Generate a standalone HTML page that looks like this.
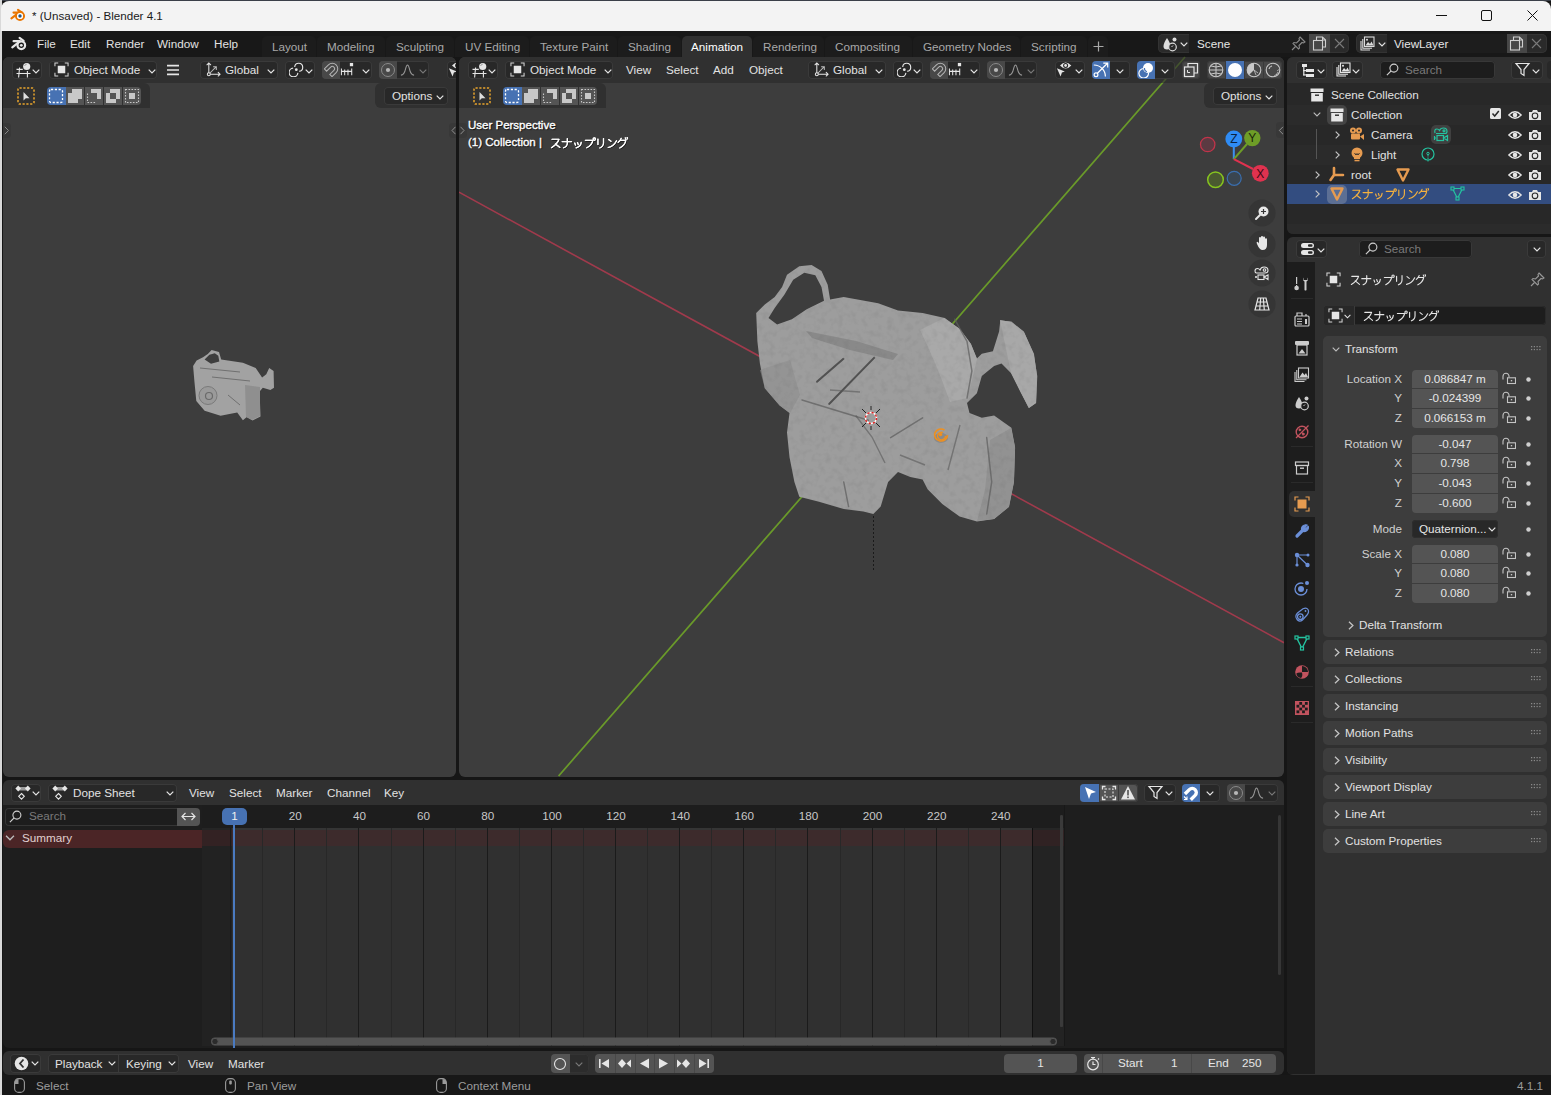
<!DOCTYPE html>
<html><head><meta charset="utf-8">
<style>
*{margin:0;padding:0;box-sizing:border-box}
html,body{width:1551px;height:1095px;overflow:hidden;background:#161616;font-family:"Liberation Sans",sans-serif;font-size:11.7px;color:#dcdcdc}
.a{position:absolute}
.t{position:absolute;white-space:nowrap;line-height:1;margin-top:-1px}
svg{position:absolute;overflow:visible}
</style></head><body>
<svg width="0" height="0" style="position:absolute">
<defs>
 <symbol id="chev" viewBox="0 0 8 5"><path d="M0.7 0.7 L4 4 L7.3 0.7" fill="none" stroke="#e6e6e6" stroke-width="1.2"/></symbol>
 <symbol id="chevd" viewBox="0 0 8 5"><path d="M0.7 0.7 L4 4 L7.3 0.7" fill="none" stroke="#7a7a7a" stroke-width="1.1"/></symbol>
 <symbol id="ed3d" viewBox="0 0 16 16"><g stroke="#e6e6e6" stroke-width="1.1" fill="none"><path d="M0.5 7.4 H6.8 M0.5 11.5 H14.5 M3.6 5.5 L2.6 15.5 M11.4 9 V15.5"/></g><circle cx="10.7" cy="4.5" r="3.6" fill="#e6e6e6"/><path d="M8.6 4 Q9 2.3 10.8 2.1" stroke="#8a8a8a" stroke-width="0.8" fill="none"/></symbol>
 <symbol id="objmode" viewBox="0 0 16 16"><path d="M1 4.5 V1 H4.5 M11.5 1 H15 V4.5 M15 11.5 V15 H11.5 M4.5 15 H1 V11.5" fill="none" stroke="#d6d6d6" stroke-width="1.1"/><rect x="4" y="4" width="8" height="8" fill="#e6e6e6"/></symbol>
 <symbol id="orient" viewBox="0 0 16 16"><g stroke="#e6e6e6" stroke-width="1.1" fill="none" stroke-linecap="round"><path d="M3 13 V1 M1 3 L3 1 L5 3 M3 13 H15 M13 11 L15 13 L13 15"/><path d="M4 12 L11 5 M8 5 H11 V8" stroke="#bbb"/><circle cx="3" cy="13" r="1.6" fill="#303030"/></g></symbol>
 <symbol id="pivot" viewBox="0 0 15 15"><g stroke="#e6e6e6" stroke-width="1.15" fill="none"><path d="M5.72 4.95 A4 4 0 1 1 10.05 9.28"/><path d="M8.88 10.88 A4.4 4.4 0 1 1 4.12 6.12"/></g><circle cx="7.3" cy="7.7" r="1.4" fill="#e6e6e6"/></symbol>
 <symbol id="magnet" viewBox="0 0 16 16"><path d="M2.2 13.5 V7.3 A5.8 5.8 0 0 1 13.8 7.3 V13.5 H10.4 V7.3 A2.4 2.4 0 0 0 5.6 7.3 V13.5 Z" fill="none" stroke="#b3b3b3" stroke-width="1.1" transform="rotate(45 8 8) translate(0 -0.5)"/></symbol>
 <symbol id="incr" viewBox="0 0 16 16"><g stroke="#e6e6e6" stroke-width="1.1" fill="none"><path d="M1 10 H13 M1.5 7 V14 M5 8 V14 M8.5 8 V14 M12.5 7 V14"/></g><rect x="10.5" y="1" width="3.5" height="3.5" fill="#e6e6e6"/></symbol>
 <symbol id="propdot" viewBox="0 0 16 16"><circle cx="8" cy="8" r="6.5" fill="none" stroke="#8a8a8a" stroke-width="1"/><circle cx="8" cy="8" r="2.1" fill="#b8b8b8"/></symbol>
 <symbol id="falloff" viewBox="0 0 16 16"><path d="M1 14 Q4.5 14 6 7 Q8 -0.5 10 7 Q11.5 14 15 14" fill="none" stroke="#9a9a9a" stroke-width="1.1"/></symbol>
 <symbol id="hamb" viewBox="0 0 16 14"><path d="M1 2 H15 M1 7 H15 M1 12 H15" stroke="#e6e6e6" stroke-width="2"/></symbol>
 <symbol id="seltool" viewBox="0 0 18 18"><rect x="1" y="1" width="16" height="16" rx="1.5" fill="none" stroke="#e8a42c" stroke-width="1.5" stroke-dasharray="2.2 1.6"/><path d="M6.5 5 L6.5 13.5 L8.8 11.3 L12.5 11.3 Z" fill="#dedede"/></symbol>
 <symbol id="mset" viewBox="0 0 16 16"><rect x="1.5" y="1.5" width="13" height="13" rx="1.5" fill="none" stroke="#fff" stroke-width="1.3" stroke-dasharray="2.2 1.6"/></symbol>
 <symbol id="mext" viewBox="0 0 16 16"><path d="M5 1 H15 V11 H11 V15 H1 V5 H5 Z" fill="#c8c8c8"/></symbol>
 <symbol id="msub" viewBox="0 0 16 16"><path d="M5 1 H15 V11 H11 V5 H5 Z" fill="#c8c8c8"/><path d="M1.5 5.5 V14.5 H10.5" fill="none" stroke="#c8c8c8" stroke-width="1.1" stroke-dasharray="1.6 1.4"/></symbol>
 <symbol id="mdif" viewBox="0 0 16 16"><path d="M5 1 H15 V11 H11 V5 H5 Z M1 5 H5 V11 H11 V15 H1 Z" fill="#c8c8c8"/></symbol>
 <symbol id="mint" viewBox="0 0 16 16"><rect x="1.5" y="1.5" width="13" height="13" fill="none" stroke="#c8c8c8" stroke-width="1.1" stroke-dasharray="1.6 1.4"/><rect x="5" y="5" width="6" height="6" fill="#c8c8c8"/></symbol>
 <symbol id="selvis" viewBox="0 0 18 18"><path d="M6 4.5 Q11.6 -1.6 17.3 4.5 Q11.6 10.6 6 4.5 Z" fill="#e6e6e6"/><circle cx="11.6" cy="4.5" r="2.5" fill="#282828"/><circle cx="11.6" cy="4.5" r="1.4" fill="#e6e6e6"/><path d="M2.9 7.2 L10.8 10.5 L7.9 11.6 L6.6 15.5 Z" fill="#e6e6e6"/></symbol>
 <symbol id="gizmo" viewBox="0 0 18 18"><g fill="none" stroke="#fff" stroke-width="1.2"><path d="M1.8 4 A11.5 11.5 0 0 1 13.4 15.5"/><circle cx="4" cy="13.7" r="1.9"/><path d="M5.4 12.3 L15.5 2.3 M11.3 2.1 H15.7 V6.5"/></g></symbol>
 <symbol id="overlay" viewBox="0 0 16 16"><circle cx="10" cy="6" r="5" fill="#fff"/><path d="M5.5 6.5 A4.8 4.8 0 1 0 10.5 11" fill="none" stroke="#fff" stroke-width="1.2"/><path d="M6.5 6 A3 3 0 0 0 9 9.5" fill="none" stroke="#4772b3" stroke-width="1.2"/></symbol>
 <symbol id="xray" viewBox="0 0 16 16"><rect x="1.5" y="5" width="9.5" height="9.5" fill="none" stroke="#e6e6e6" stroke-width="1.2"/><path d="M5 5 V1.5 H14.5 V11 H11" fill="none" stroke="#e6e6e6" stroke-width="1.2"/><path d="M4.5 8 V10.5 H7" fill="none" stroke="#e6e6e6" stroke-width="1"/></symbol>
 <symbol id="shwire" viewBox="0 0 16 16"><circle cx="8" cy="8" r="6.8" fill="none" stroke="#c8c8c8" stroke-width="1.1"/><path d="M1.2 8 H14.8 M8 1.2 V14.8 M3 4 Q8 6 13 4 M3 12 Q8 10 13 12" fill="none" stroke="#c8c8c8" stroke-width="1"/></symbol>
 <symbol id="shsolid" viewBox="0 0 16 16"><circle cx="8" cy="8" r="7" fill="#fff"/></symbol>
 <symbol id="shmat" viewBox="0 0 16 16"><circle cx="8" cy="8" r="6.8" fill="none" stroke="#c8c8c8" stroke-width="1.1"/><path d="M8 1.2 V8 L3.2 12.8 A6.8 6.8 0 0 1 8 1.2 Z" fill="#c8c8c8"/><path d="M8 8 L10 13 M8 8 L12 11" stroke="#c8c8c8" stroke-width="0.8"/></symbol>
 <symbol id="shrend" viewBox="0 0 16 16"><circle cx="8" cy="8" r="6.8" fill="none" stroke="#c8c8c8" stroke-width="1.1"/><path d="M4 7 Q4.5 4.5 7 4" fill="none" stroke="#c8c8c8" stroke-width="1.2"/><path d="M11 13 L13 10 M9 14 L12.5 12 M12 9 L14 7.5" stroke="#c8c8c8" stroke-width="0.7"/></symbol>
 <symbol id="kata" viewBox="0 0 84 12"><g fill="none" stroke="currentColor" stroke-width="1.25" stroke-linecap="round" stroke-linejoin="round">
  <path d="M2 2 H9.5 Q8 7 1.5 11 M5.8 7 L10.5 10.8"/>
  <path d="M13 4.5 H23 M18.5 1.2 V6.5 Q18.3 9.8 14.5 11.2"/>
  <path d="M26.5 6 L27.3 8.3 M29.5 5.5 L30.3 7.8 M33.5 5.3 Q33 9.8 28 11.3"/>
  <path d="M38 3.2 H46 Q45 8.5 39.5 11.2"/><circle cx="47.6" cy="1.8" r="1.3"/>
  <path d="M51.5 1.8 V7.5 M57.5 1.2 V6 Q57.3 9.8 53.5 11.3"/>
  <path d="M63 2.3 L65.5 4.2 M62.5 10.8 Q68.5 9.5 71.5 3.5"/>
  <path d="M76.5 1 Q75.5 3.8 73.3 5.3 M76 3.2 H81.5 Q80.5 8.8 75 11.3 M81 0.5 L81.8 2.2 M83 0.1 L83.8 1.8"/>
 </g></symbol>
 <symbol id="eye" viewBox="0 0 14 10"><path d="M0.8 5 Q7 -1.5 13.2 5 Q7 11.5 0.8 5 Z" fill="none" stroke="#e6e6e6" stroke-width="1.3"/><circle cx="7" cy="5" r="2.3" fill="#e6e6e6"/></symbol>
 <symbol id="cam" viewBox="0 0 14 12"><path d="M1 3 H4 L5 1 H9 L10 3 H13 V11 H1 Z" fill="#e6e6e6"/><circle cx="7" cy="6.8" r="2.8" fill="none" stroke="#282828" stroke-width="1.1"/></symbol>
 <symbol id="coll" viewBox="0 0 14 14"><rect x="0.5" y="0.5" width="13" height="3.5" fill="#e6e6e6"/><rect x="1.2" y="5" width="11.6" height="8.5" fill="#e6e6e6"/><rect x="5" y="6.5" width="4" height="1.4" fill="#282828"/></symbol>
 <symbol id="chevr" viewBox="0 0 5 8"><path d="M0.7 0.7 L4.2 4 L0.7 7.3" fill="none" stroke="#c4c4c4" stroke-width="1.15"/></symbol>
 <symbol id="chevdn" viewBox="0 0 8 5"><path d="M0.7 0.7 L4 4 L7.3 0.7" fill="none" stroke="#bdbdbd" stroke-width="1.1"/></symbol>
 <symbol id="lock" viewBox="0 0 14 14"><path d="M1 7.5 V4.3 A3 3 0 0 1 7 4.3 V5.3" fill="none" stroke="#c4c4c4" stroke-width="1.1"/><rect x="5.5" y="5.8" width="8" height="5.7" fill="none" stroke="#c4c4c4" stroke-width="1.1"/><rect x="8.8" y="8" width="1.4" height="1.4" fill="#c4c4c4"/></symbol>
 <symbol id="dots" viewBox="0 0 12 6"><g fill="#8a8a8a"><rect x="0" y="0" width="1.5" height="1.5"/><rect x="3.3" y="0" width="1.5" height="1.5"/><rect x="6.6" y="0" width="1.5" height="1.5"/><rect x="9.9" y="0" width="1.5" height="1.5"/><rect x="0" y="3.5" width="1.5" height="1.5"/><rect x="3.3" y="3.5" width="1.5" height="1.5"/><rect x="6.6" y="3.5" width="1.5" height="1.5"/><rect x="9.9" y="3.5" width="1.5" height="1.5"/></g></symbol>
 <symbol id="search" viewBox="0 0 14 14"><circle cx="8.5" cy="5.5" r="4.3" fill="none" stroke="#d0d0d0" stroke-width="1.2"/><path d="M5.5 8.5 L1 13" stroke="#d0d0d0" stroke-width="1.3"/></symbol>
 <symbol id="objsq" viewBox="0 0 16 16"><path d="M1 4.5 V1 H4.5 M11.5 1 H15 V4.5 M15 11.5 V15 H11.5 M4.5 15 H1 V11.5" fill="none" stroke="#d6d6d6" stroke-width="1.1"/><rect x="4" y="4" width="8" height="8" fill="#e6e6e6"/></symbol>
 <symbol id="edds" viewBox="0 0 16 16"><rect x="4" y="2" width="8" height="3.5" fill="#9a9a9a"/><g fill="#e6e6e6"><path d="M3.2 0.5 L6 3.5 L3.2 6.5 L0.4 3.5 Z"/><path d="M12.8 0.5 L15.6 3.5 L12.8 6.5 L10 3.5 Z"/></g><path d="M6.5 8.5 L9.3 11.3 L6.5 14.1 L3.7 11.3 Z" fill="none" stroke="#e6e6e6" stroke-width="1.1"/></symbol>
 <symbol id="cursorsel" viewBox="0 0 16 16"><path d="M3 2 L14 7 L9 8.5 L7 14 Z" fill="#fff"/></symbol>
</defs></svg>

<div class="a" style="left:0px;top:0px;width:1551px;height:1px;background:#3a3f48;border-radius:0px;"></div>
<div class="a" style="left:0px;top:0px;width:2px;height:1095px;background:#d9d9d9;border-radius:0px;"></div>
<div class="a" style="left:0px;top:1px;width:2px;height:30px;background:#d9d9d9;border-radius:0px;"></div>
<div class="a" style="left:1px;top:1px;width:1550px;height:30px;background:#f3f3f3;border-radius:8px 8px 0 0;"></div>
<div class="a" style="left:2px;top:31px;width:1549px;height:26px;background:#181818;border-radius:0px;"></div>
<svg style="left:0px;top:0px" width="30" height="30" viewBox="0 0 30 30"><g stroke="#ea7600" stroke-width="2.1" stroke-linecap="round" fill="none"><path d="M11.4 18.3 L16.6 14.3"/><path d="M13.5 12.6 H19"/><path d="M18 9.8 L22 12.6"/><circle cx="20" cy="16" r="4"/></g><circle cx="20" cy="16" r="3" fill="#fff"/><circle cx="20" cy="16" r="1.7" fill="#265787"/></svg>
<div class="t" style="left:32px;top:10.5px;color:#1a1a1a;font-size:11.6px;">* (Unsaved) - Blender 4.1</div>
<svg style="left:1436px;top:15px" width="11" height="1"><rect width="11" height="1" fill="#111"/></svg>
<svg style="left:1481px;top:10px" width="11" height="11"><rect x="0.5" y="0.5" width="10" height="10" rx="1.5" fill="none" stroke="#111" stroke-width="1"/></svg>
<svg style="left:1527px;top:10px" width="11" height="11"><path d="M0.5 0.5 L10.5 10.5 M10.5 0.5 L0.5 10.5" stroke="#111" stroke-width="1"/></svg>
<svg style="left:0px;top:30px" width="30" height="25" viewBox="0 30 30 25"><g stroke="#e6e6e6" stroke-width="2.2" stroke-linecap="round" fill="none"><path d="M12.3 47.4 L17.6 43.2"/><path d="M13.6 41.2 H20"/><path d="M19.6 37.8 L23.6 40.8"/><circle cx="21.3" cy="45.3" r="3.8"/></g><circle cx="21.3" cy="45.3" r="1.4" fill="#e6e6e6"/></svg>
<div class="t" style="left:37px;top:39px;color:#e2e2e2;">File</div>
<div class="t" style="left:70px;top:39px;color:#e2e2e2;">Edit</div>
<div class="t" style="left:106px;top:39px;color:#e2e2e2;">Render</div>
<div class="t" style="left:157px;top:39px;color:#e2e2e2;">Window</div>
<div class="t" style="left:214px;top:39px;color:#e2e2e2;">Help</div>
<div class="a" style="left:262px;top:36px;width:54px;height:21px;background:#1c1c1c;border-radius:5px 5px 0 0;"></div>
<div class="t" style="left:272px;top:42px;color:#a8a8a8;">Layout</div>
<div class="a" style="left:317px;top:36px;width:68px;height:21px;background:#1c1c1c;border-radius:5px 5px 0 0;"></div>
<div class="t" style="left:327px;top:42px;color:#a8a8a8;">Modeling</div>
<div class="a" style="left:386px;top:36px;width:68px;height:21px;background:#1c1c1c;border-radius:5px 5px 0 0;"></div>
<div class="t" style="left:396px;top:42px;color:#a8a8a8;">Sculpting</div>
<div class="a" style="left:455px;top:36px;width:74px;height:21px;background:#1c1c1c;border-radius:5px 5px 0 0;"></div>
<div class="t" style="left:465px;top:42px;color:#a8a8a8;">UV Editing</div>
<div class="a" style="left:530px;top:36px;width:87px;height:21px;background:#1c1c1c;border-radius:5px 5px 0 0;"></div>
<div class="t" style="left:540px;top:42px;color:#a8a8a8;">Texture Paint</div>
<div class="a" style="left:618px;top:36px;width:63px;height:21px;background:#1c1c1c;border-radius:5px 5px 0 0;"></div>
<div class="t" style="left:628px;top:42px;color:#a8a8a8;">Shading</div>
<div class="a" style="left:682px;top:36px;width:70px;height:21px;background:#303030;border-radius:5px 5px 0 0;"></div>
<div class="t" style="left:691px;top:42px;color:#ffffff;">Animation</div>
<div class="a" style="left:753px;top:36px;width:71px;height:21px;background:#1c1c1c;border-radius:5px 5px 0 0;"></div>
<div class="t" style="left:763px;top:42px;color:#a8a8a8;">Rendering</div>
<div class="a" style="left:825px;top:36px;width:87px;height:21px;background:#1c1c1c;border-radius:5px 5px 0 0;"></div>
<div class="t" style="left:835px;top:42px;color:#a8a8a8;">Compositing</div>
<div class="a" style="left:913px;top:36px;width:107px;height:21px;background:#1c1c1c;border-radius:5px 5px 0 0;"></div>
<div class="t" style="left:923px;top:42px;color:#a8a8a8;">Geometry Nodes</div>
<div class="a" style="left:1021px;top:36px;width:66px;height:21px;background:#1c1c1c;border-radius:5px 5px 0 0;"></div>
<div class="t" style="left:1031px;top:42px;color:#a8a8a8;">Scripting</div>
<div class="a" style="left:1088px;top:36px;width:20px;height:21px;background:#1c1c1c;border-radius:5px 5px 0 0;"></div>
<svg style="left:1093px;top:41px" width="11" height="11"><path d="M5.5 0.5 V10.5 M0.5 5.5 H10.5" stroke="#a8a8a8" stroke-width="1.2"/></svg>
<div class="a" style="left:1158px;top:34px;width:191px;height:19px;background:#2a2a2a;border-radius:5px;box-shadow:inset 0 0 0 1px #333"></div>
<div class="a" style="left:1189px;top:34px;width:120px;height:19px;background:#1d1d1d;border-radius:0px;"></div>
<div class="a" style="left:1309px;top:34px;width:21px;height:19px;background:#474747;border-radius:0px;"></div>
<svg style="left:1162px;top:36px" width="16" height="16" viewBox="0 0 16 16"><path d="M5 2 Q1 8 1.5 11 Q2 13.5 5 13.5 Q8 13.5 8.5 11 Q9 8 5 2 Z" fill="#ddd"/><circle cx="12.5" cy="3.5" r="2" fill="#ddd"/><circle cx="10.5" cy="11" r="3.8" fill="#2a2a2a" stroke="#ddd" stroke-width="1.2"/><path d="M9.5 11 L11 9.5" stroke="#ddd" stroke-width="1"/></svg>
<svg style="left:1180px;top:42px;" width="8" height="5"><use href="#chev" width="8" height="5"/></svg>
<div class="t" style="left:1197px;top:39px;color:#e6e6e6;">Scene</div>
<svg style="left:1291px;top:36px" width="15" height="15" viewBox="0 0 15 15"><path d="M9 1 L14 6 L12.5 7 L11 6.5 L8 9.5 L8.5 12 L7.5 13 L2 7.5 L3 6.5 L5.5 7 L8.5 4 L8 2.5 Z" fill="none" stroke="#8a8a8a" stroke-width="1.1"/><path d="M4.5 10.5 L1 14" stroke="#8a8a8a" stroke-width="1.1"/></svg>
<svg style="left:1312px;top:36px" width="15" height="15" viewBox="0 0 15 15"><path d="M4.5 4 V1 H10.5 L13.5 4 V11 H10.5" fill="none" stroke="#cfcfcf" stroke-width="1.1"/><path d="M10.5 1 V4 H13.5" fill="none" stroke="#cfcfcf" stroke-width="1"/><rect x="1.5" y="4.5" width="9" height="9.5" fill="none" stroke="#cfcfcf" stroke-width="1.1"/></svg>
<svg style="left:1334px;top:38px" width="11" height="11"><path d="M1 1 L10 10 M10 1 L1 10" stroke="#7a7a7a" stroke-width="1.1"/></svg>
<div class="a" style="left:1356px;top:34px;width:191px;height:19px;background:#2a2a2a;border-radius:5px;box-shadow:inset 0 0 0 1px #333"></div>
<div class="a" style="left:1387px;top:34px;width:120px;height:19px;background:#1d1d1d;border-radius:0px;"></div>
<div class="a" style="left:1507px;top:34px;width:20px;height:19px;background:#474747;border-radius:0px;"></div>
<svg style="left:1360px;top:36px" width="15" height="15" viewBox="0 0 15 15"><g fill="none" stroke="#ddd" stroke-width="1.1"><rect x="4.5" y="1" width="9.5" height="9.5"/><path d="M2.8 3 V12.2 H12 M1 5 V14 H10"/></g><path d="M5.5 9.5 L8 6 L10 8 L11.5 5.5 L13.5 9.5 Z" fill="#ddd"/><circle cx="7" cy="3.8" r="1" fill="#ddd"/></svg>
<svg style="left:1378px;top:42px;" width="8" height="5"><use href="#chev" width="8" height="5"/></svg>
<div class="t" style="left:1394px;top:39px;color:#e6e6e6;">ViewLayer</div>
<svg style="left:1509px;top:36px" width="15" height="15" viewBox="0 0 15 15"><path d="M4.5 4 V1 H10.5 L13.5 4 V11 H10.5" fill="none" stroke="#cfcfcf" stroke-width="1.1"/><path d="M10.5 1 V4 H13.5" fill="none" stroke="#cfcfcf" stroke-width="1"/><rect x="1.5" y="4.5" width="9" height="9.5" fill="none" stroke="#cfcfcf" stroke-width="1.1"/></svg>
<svg style="left:1531px;top:38px" width="11" height="11"><path d="M1 1 L10 10 M10 1 L1 10" stroke="#7a7a7a" stroke-width="1.1"/></svg>
<div class="a" style="left:3px;top:57px;width:453px;height:720px;background:#3d3d3d;border-radius:6px;overflow:hidden">
<div class="a" style="left:0px;top:0px;width:453px;height:26px;background:#303030;border-radius:0px;"></div>
<div class="a" style="left:0px;top:26px;width:147px;height:25px;background:#303030;border-radius:0 6px 0 0;"></div>
<div class="a" style="left:372px;top:26px;width:81px;height:25px;background:#303030;border-radius:6px 0 0 6px;"></div>
</div>
<div class="a" style="left:12px;top:61px;width:30px;height:18px;background:#282828;border-radius:4px;box-shadow:inset 0 0 0 1px #3a3a3a"></div>
<svg style="left:16px;top:62px;" width="16" height="16"><use href="#ed3d" width="16" height="16"/></svg>
<svg style="left:32px;top:69px;" width="8" height="5"><use href="#chev" width="8" height="5"/></svg>
<div class="a" style="left:49px;top:61px;width:108px;height:18px;background:#282828;border-radius:4px;box-shadow:inset 0 0 0 1px #3a3a3a"></div>
<svg style="left:54px;top:62px;" width="15" height="15"><use href="#objmode" width="15" height="15"/></svg>
<div class="t" style="left:74px;top:65px;color:#e2e2e2;">Object Mode</div>
<svg style="left:148px;top:69px;" width="8" height="5"><use href="#chev" width="8" height="5"/></svg>
<svg style="left:166px;top:64px;" width="14" height="12"><use href="#hamb" width="14" height="12"/></svg>
<div class="a" style="left:200px;top:61px;width:78px;height:18px;background:#282828;border-radius:4px;box-shadow:inset 0 0 0 1px #3a3a3a"></div>
<svg style="left:206px;top:62px;" width="15" height="15"><use href="#orient" width="15" height="15"/></svg>
<div class="t" style="left:225px;top:65px;color:#e2e2e2;">Global</div>
<svg style="left:267px;top:69px;" width="8" height="5"><use href="#chev" width="8" height="5"/></svg>
<div class="a" style="left:285px;top:61px;width:30px;height:18px;background:#282828;border-radius:4px;box-shadow:inset 0 0 0 1px #3a3a3a"></div>
<svg style="left:289px;top:62px;" width="15" height="15"><use href="#pivot" width="15" height="15"/></svg>
<svg style="left:305px;top:69px;" width="8" height="5"><use href="#chev" width="8" height="5"/></svg>
<div class="a" style="left:322px;top:61px;width:50px;height:18px;background:#282828;border-radius:4px;box-shadow:inset 0 0 0 1px #3a3a3a"></div>
<div class="a" style="left:322px;top:61px;width:18px;height:18px;background:#484848;border-radius:4px 0 0 4px;"></div>
<svg style="left:324px;top:62px;" width="15" height="15"><use href="#magnet" width="15" height="15"/></svg>
<svg style="left:340px;top:62px;" width="15" height="15"><use href="#incr" width="15" height="15"/></svg>
<svg style="left:362px;top:69px;" width="8" height="5"><use href="#chev" width="8" height="5"/></svg>
<div class="a" style="left:379px;top:61px;width:50px;height:18px;background:#282828;border-radius:4px;box-shadow:inset 0 0 0 1px #3a3a3a"></div>
<div class="a" style="left:379px;top:61px;width:18px;height:18px;background:#484848;border-radius:4px 0 0 4px;"></div>
<svg style="left:380px;top:62px;" width="16" height="16"><use href="#propdot" width="16" height="16"/></svg>
<svg style="left:400px;top:62px;" width="15" height="15"><use href="#falloff" width="15" height="15"/></svg>
<svg style="left:419px;top:69px;" width="8" height="5"><use href="#chevd" width="8" height="5"/></svg>
<div class="a" style="left:447px;top:61px;width:12px;height:18px;background:#282828;border-radius:4px;box-shadow:inset 0 0 0 1px #3a3a3a"></div>
<svg style="left:446px;top:61px;" width="18" height="18"><use href="#selvis" width="18" height="18"/></svg>
<div class="a" style="left:456px;top:57px;width:3px;height:27px;background:#161616;border-radius:0px;"></div>
<svg style="left:17px;top:87px;" width="18" height="18"><use href="#seltool" width="18" height="18"/></svg>
<div class="a" style="left:47px;top:87px;width:19px;height:18px;background:#4772b3;border-radius:4px 0 0 4px;"></div>
<svg style="left:48px;top:88px;" width="16" height="16"><use href="#mset" width="16" height="16"/></svg>
<div class="a" style="left:66px;top:87px;width:18px;height:18px;background:#545454;border-radius:0;"></div>
<svg style="left:67px;top:88px;" width="16" height="16"><use href="#mext" width="16" height="16"/></svg>
<div class="a" style="left:85px;top:87px;width:18px;height:18px;background:#545454;border-radius:0;"></div>
<svg style="left:86px;top:88px;" width="16" height="16"><use href="#msub" width="16" height="16"/></svg>
<div class="a" style="left:104px;top:87px;width:18px;height:18px;background:#545454;border-radius:0;"></div>
<svg style="left:105px;top:88px;" width="16" height="16"><use href="#mdif" width="16" height="16"/></svg>
<div class="a" style="left:123px;top:87px;width:18px;height:18px;background:#545454;border-radius:0 4px 4px 0;"></div>
<svg style="left:124px;top:88px;" width="16" height="16"><use href="#mint" width="16" height="16"/></svg>
<div class="a" style="left:384px;top:87px;width:64px;height:18px;background:#282828;border-radius:4px;box-shadow:inset 0 0 0 1px #3a3a3a"></div>
<div class="t" style="left:392px;top:91px;color:#e2e2e2;">Options</div>
<svg style="left:436px;top:95px;" width="8" height="5"><use href="#chev" width="8" height="5"/></svg>
<div class="a" style="left:459px;top:57px;width:825px;height:720px;background:#3d3d3d;border-radius:6px;overflow:hidden">
<div class="a" style="left:0px;top:0px;width:825px;height:26px;background:#303030;border-radius:0px;"></div>
<div class="a" style="left:0px;top:26px;width:147px;height:25px;background:#303030;border-radius:0 6px 0 0;"></div>
<div class="a" style="left:745px;top:26px;width:80px;height:25px;background:#303030;border-radius:6px 0 0 6px;"></div>
</div>
<svg style="left:459px;top:57px" width="825" height="26" viewBox="459 57 825 26"><line x1="558.6" y1="776" x2="1185" y2="57" stroke="#6a9a2a" stroke-width="1.6" opacity="0.35"/></svg>
<div class="a" style="left:468px;top:61px;width:30px;height:18px;background:#282828;border-radius:4px;box-shadow:inset 0 0 0 1px #3a3a3a"></div>
<svg style="left:472px;top:62px;" width="16" height="16"><use href="#ed3d" width="16" height="16"/></svg>
<svg style="left:488px;top:69px;" width="8" height="5"><use href="#chev" width="8" height="5"/></svg>
<div class="a" style="left:505px;top:61px;width:108px;height:18px;background:#282828;border-radius:4px;box-shadow:inset 0 0 0 1px #3a3a3a"></div>
<svg style="left:510px;top:62px;" width="15" height="15"><use href="#objmode" width="15" height="15"/></svg>
<div class="t" style="left:530px;top:65px;color:#e2e2e2;">Object Mode</div>
<svg style="left:604px;top:69px;" width="8" height="5"><use href="#chev" width="8" height="5"/></svg>
<div class="t" style="left:626px;top:65px;color:#e2e2e2;">View</div>
<div class="t" style="left:666px;top:65px;color:#e2e2e2;">Select</div>
<div class="t" style="left:713px;top:65px;color:#e2e2e2;">Add</div>
<div class="t" style="left:749px;top:65px;color:#e2e2e2;">Object</div>
<div class="a" style="left:808px;top:61px;width:78px;height:18px;background:#282828;border-radius:4px;box-shadow:inset 0 0 0 1px #3a3a3a"></div>
<svg style="left:814px;top:62px;" width="15" height="15"><use href="#orient" width="15" height="15"/></svg>
<div class="t" style="left:833px;top:65px;color:#e2e2e2;">Global</div>
<svg style="left:875px;top:69px;" width="8" height="5"><use href="#chev" width="8" height="5"/></svg>
<div class="a" style="left:893px;top:61px;width:30px;height:18px;background:#282828;border-radius:4px;box-shadow:inset 0 0 0 1px #3a3a3a"></div>
<svg style="left:897px;top:62px;" width="15" height="15"><use href="#pivot" width="15" height="15"/></svg>
<svg style="left:913px;top:69px;" width="8" height="5"><use href="#chev" width="8" height="5"/></svg>
<div class="a" style="left:930px;top:61px;width:50px;height:18px;background:#282828;border-radius:4px;box-shadow:inset 0 0 0 1px #3a3a3a"></div>
<div class="a" style="left:930px;top:61px;width:18px;height:18px;background:#484848;border-radius:4px 0 0 4px;"></div>
<svg style="left:932px;top:62px;" width="15" height="15"><use href="#magnet" width="15" height="15"/></svg>
<svg style="left:948px;top:62px;" width="15" height="15"><use href="#incr" width="15" height="15"/></svg>
<svg style="left:970px;top:69px;" width="8" height="5"><use href="#chev" width="8" height="5"/></svg>
<div class="a" style="left:987px;top:61px;width:50px;height:18px;background:#282828;border-radius:4px;box-shadow:inset 0 0 0 1px #3a3a3a"></div>
<div class="a" style="left:987px;top:61px;width:18px;height:18px;background:#484848;border-radius:4px 0 0 4px;"></div>
<svg style="left:988px;top:62px;" width="16" height="16"><use href="#propdot" width="16" height="16"/></svg>
<svg style="left:1008px;top:62px;" width="15" height="15"><use href="#falloff" width="15" height="15"/></svg>
<svg style="left:1027px;top:69px;" width="8" height="5"><use href="#chevd" width="8" height="5"/></svg>
<div class="a" style="left:1055px;top:61px;width:30px;height:18px;background:#282828;border-radius:4px;box-shadow:inset 0 0 0 1px #3a3a3a"></div>
<svg style="left:1054px;top:61px;" width="18" height="18"><use href="#selvis" width="18" height="18"/></svg>
<svg style="left:1075px;top:69px;" width="8" height="5"><use href="#chev" width="8" height="5"/></svg>
<div class="a" style="left:1092px;top:61px;width:38px;height:18px;background:#282828;border-radius:4px;box-shadow:inset 0 0 0 1px #3a3a3a"></div>
<div class="a" style="left:1092px;top:61px;width:18px;height:18px;background:#4772b3;border-radius:4px 0 0 4px;"></div>
<svg style="left:1092px;top:61px;" width="18" height="18"><use href="#gizmo" width="18" height="18"/></svg>
<svg style="left:1116px;top:69px;" width="8" height="5"><use href="#chev" width="8" height="5"/></svg>
<div class="a" style="left:1137px;top:61px;width:38px;height:18px;background:#282828;border-radius:4px;box-shadow:inset 0 0 0 1px #3a3a3a"></div>
<div class="a" style="left:1137px;top:61px;width:18px;height:18px;background:#4772b3;border-radius:4px 0 0 4px;"></div>
<svg style="left:1138px;top:62px;" width="16" height="16"><use href="#overlay" width="16" height="16"/></svg>
<svg style="left:1161px;top:69px;" width="8" height="5"><use href="#chev" width="8" height="5"/></svg>
<div class="a" style="left:1182px;top:61px;width:18px;height:18px;background:#484848;border-radius:4px;box-shadow:inset 0 0 0 1px #3a3a3a"></div>
<svg style="left:1183px;top:62px;" width="16" height="16"><use href="#xray" width="16" height="16"/></svg>
<div class="a" style="left:1207px;top:61px;width:75px;height:18px;background:#484848;border-radius:4px;box-shadow:inset 0 0 0 1px #3a3a3a"></div>
<div class="a" style="left:1226px;top:61px;width:18px;height:18px;background:#4772b3;border-radius:0px;"></div>
<svg style="left:1208px;top:62px;" width="16" height="16"><use href="#shwire" width="16" height="16"/></svg>
<svg style="left:1227px;top:62px;" width="16" height="16"><use href="#shsolid" width="16" height="16"/></svg>
<svg style="left:1246px;top:62px;" width="16" height="16"><use href="#shmat" width="16" height="16"/></svg>
<svg style="left:1265px;top:62px;" width="16" height="16"><use href="#shrend" width="16" height="16"/></svg>
<div class="a" style="left:1225px;top:61px;width:1px;height:18px;background:#3a3a3a;border-radius:0px;"></div>
<div class="a" style="left:1244px;top:61px;width:1px;height:18px;background:#3a3a3a;border-radius:0px;"></div>
<div class="a" style="left:1263px;top:61px;width:1px;height:18px;background:#3a3a3a;border-radius:0px;"></div>
<svg style="left:473px;top:87px;" width="18" height="18"><use href="#seltool" width="18" height="18"/></svg>
<div class="a" style="left:503px;top:87px;width:19px;height:18px;background:#4772b3;border-radius:4px 0 0 4px;"></div>
<svg style="left:504px;top:88px;" width="16" height="16"><use href="#mset" width="16" height="16"/></svg>
<div class="a" style="left:522px;top:87px;width:18px;height:18px;background:#545454;border-radius:0;"></div>
<svg style="left:523px;top:88px;" width="16" height="16"><use href="#mext" width="16" height="16"/></svg>
<div class="a" style="left:541px;top:87px;width:18px;height:18px;background:#545454;border-radius:0;"></div>
<svg style="left:542px;top:88px;" width="16" height="16"><use href="#msub" width="16" height="16"/></svg>
<div class="a" style="left:560px;top:87px;width:18px;height:18px;background:#545454;border-radius:0;"></div>
<svg style="left:561px;top:88px;" width="16" height="16"><use href="#mdif" width="16" height="16"/></svg>
<div class="a" style="left:579px;top:87px;width:18px;height:18px;background:#545454;border-radius:0 4px 4px 0;"></div>
<svg style="left:580px;top:88px;" width="16" height="16"><use href="#mint" width="16" height="16"/></svg>
<div class="a" style="left:1213px;top:87px;width:64px;height:18px;background:#282828;border-radius:4px;box-shadow:inset 0 0 0 1px #3a3a3a"></div>
<div class="t" style="left:1221px;top:91px;color:#e2e2e2;">Options</div>
<svg style="left:1265px;top:95px;" width="8" height="5"><use href="#chev" width="8" height="5"/></svg>
<svg style="left:459px;top:57px" width="825" height="720" viewBox="459 57 825 720"><defs><clipPath id="vpc"><rect x="459" y="83" width="825" height="694" rx="6"/></clipPath></defs><g clip-path="url(#vpc)">
<line x1="459" y1="192.2" x2="1284" y2="642.7" stroke="#a03a4c" stroke-width="1.6"/>
<line x1="558.6" y1="776" x2="1185" y2="57" stroke="#6a9a2a" stroke-width="1.6"/>
<defs><filter id="bump" x="0" y="0" width="100%" height="100%"><feTurbulence type="fractalNoise" baseFrequency="0.16" numOctaves="2" seed="3" result="n"/><feColorMatrix in="n" type="matrix" values="0 0 0 0 0  0 0 0 0 0  0 0 0 0 0  0 0 0 -1.4 0.75" result="a"/><feComposite in="SourceGraphic" in2="a" operator="in"/></filter><clipPath id="mclip"><path d="M756.2,313.0 L764.8,304.4 L774.7,297.0 L782.1,287.1 L787.0,274.8 L799.3,266.2 L811.6,264.9 L821.5,271.1 L827.7,284.7 L830.1,299.5 L843.7,297.0 L878.2,303.2 L898.0,310.6 L922.6,313.0 L944.8,318.0 L959.6,329.0 L970.7,343.8 L976.9,358.6 L981.8,353.7 L992.9,351.2 L999.1,331.5 L1000.3,320.4 L1011.4,321.6 L1023.7,331.5 L1033.6,353.7 L1037.3,375.9 L1036.1,403.0 L1028.7,408.0 L1021.3,393.2 L1011.4,373.4 L1001.5,363.6 L994.1,366.0 L981.8,375.9 L976.9,393.2 L967.0,403.0 L969.5,412.9 L981.8,417.8 L994.1,415.4 L1011.4,427.7 L1015.1,447.4 L1013.9,481.9 L1008.9,506.6 L994.1,518.9 L976.9,521.4 L959.6,516.5 L942.3,504.1 L927.6,489.3 L922.6,479.5 L910.3,477.0 L898.0,472.1 L888.1,481.9 L880.7,506.6 L873.3,514.0 L863.4,511.5 L843.7,509.1 L819.0,501.7 L799.3,496.7 L794.4,481.9 L789.5,457.3 L787.0,432.6 L789.5,412.9 L779.6,405.5 L764.8,388.2 L759.9,363.6 L757.4,341.4 Z M768.5,318.0 L774.7,308.1 L784.5,294.5 L793.2,279.7 L804.3,272.8 L815.3,275.3 L821.5,287.1 L824.0,300.7 L806.7,309.3 L791.9,319.2 L777.1,324.6 Z" clip-rule="evenodd"/></clipPath></defs>
<path d="M756.2,313.0 L764.8,304.4 L774.7,297.0 L782.1,287.1 L787.0,274.8 L799.3,266.2 L811.6,264.9 L821.5,271.1 L827.7,284.7 L830.1,299.5 L843.7,297.0 L878.2,303.2 L898.0,310.6 L922.6,313.0 L944.8,318.0 L959.6,329.0 L970.7,343.8 L976.9,358.6 L981.8,353.7 L992.9,351.2 L999.1,331.5 L1000.3,320.4 L1011.4,321.6 L1023.7,331.5 L1033.6,353.7 L1037.3,375.9 L1036.1,403.0 L1028.7,408.0 L1021.3,393.2 L1011.4,373.4 L1001.5,363.6 L994.1,366.0 L981.8,375.9 L976.9,393.2 L967.0,403.0 L969.5,412.9 L981.8,417.8 L994.1,415.4 L1011.4,427.7 L1015.1,447.4 L1013.9,481.9 L1008.9,506.6 L994.1,518.9 L976.9,521.4 L959.6,516.5 L942.3,504.1 L927.6,489.3 L922.6,479.5 L910.3,477.0 L898.0,472.1 L888.1,481.9 L880.7,506.6 L873.3,514.0 L863.4,511.5 L843.7,509.1 L819.0,501.7 L799.3,496.7 L794.4,481.9 L789.5,457.3 L787.0,432.6 L789.5,412.9 L779.6,405.5 L764.8,388.2 L759.9,363.6 L757.4,341.4 Z M768.5,318.0 L774.7,308.1 L784.5,294.5 L793.2,279.7 L804.3,272.8 L815.3,275.3 L821.5,287.1 L824.0,300.7 L806.7,309.3 L791.9,319.2 L777.1,324.6 Z" fill="#9d9d9d" fill-rule="evenodd"/><path d="M944,318 L960,329 L971,344 L977,359 L972,380 L967,398 L950,402 Q935,360 920,330 Z" fill="#a9a9a9"/><path d="M1000,320 L1011,322 L1024,332 L1034,354 L1037,376 L1036,403 L1029,408 L1021,393 L1011,373 Z" fill="#a8a8a8"/><path d="M990,440 L1011,428 L1015,447 L1014,482 L1009,507 L994,519 L977,521 L985,490 Z" fill="#929292"/><path d="M806,331 L856,341 L898,354 L893,360 L850,350 L812,338 Z" fill="#808080" opacity="0.7"/><g stroke="#5e5e5e" stroke-width="1.5" fill="none" stroke-linecap="round" opacity="0.7"><path d="M816.6,382.1 L843.7,358.6"/><path d="M828.9,404.3 L874.5,357.4"/><path d="M802,400 L868.4,420.3"/><path d="M954.7,319.2 L967.0,341.4 L971.9,371.0 L967.0,398.1"/><path d="M890.6,437.6 L922.6,417.8"/><path d="M986.7,437.6 L991.7,481.9 L986.7,514.0"/><path d="M843.7,481.9 L848.6,506.6"/></g><path d="M816.6,382.1 L843.7,358.6 M828.9,404.3 L874.5,357.4" stroke="#4a4a4a" stroke-width="2" fill="none" opacity="0.8"/><path d="M855.7,415.5 L872,437 L885,463 M900,455 L925,465 M960,425 L948,470 M830,390 L860,392" stroke="#5a5a5a" stroke-width="1.4" fill="none" opacity="0.6"/><path d="M760,370 L790,360 L800,395 L790,413 L779.6,405.5 L764.8,388.2 Z" fill="#8e8e8e" opacity="0.6"/>
<g clip-path="url(#mclip)"><rect x="750" y="260" width="300" height="270" fill="#5a5a5a" filter="url(#bump)" opacity="0.2"/></g>
<circle cx="871" cy="418" r="5.5" fill="none" stroke="#fff" stroke-width="1.5"/><circle cx="871" cy="418" r="5.5" fill="none" stroke="#d22" stroke-width="1.5" stroke-dasharray="2.2 2.1"/>
<path d="M862,409 L866,413 M876,423 L880,427 M880,409 L876,413 M866,423 L862,427 M871,406 V410 M871,426 V430" stroke="#222" stroke-width="1"/>
<ellipse cx="941" cy="438" rx="7" ry="5" fill="#8a8a8a"/><path d="M944.5,430 A6.5 6 0 1 0 947.5,435" fill="none" stroke="#f0901e" stroke-width="1.6"/><path d="M943,432.5 A4 3.8 0 1 0 945.5,436" fill="none" stroke="#f0901e" stroke-width="1.3"/><circle cx="940.5" cy="434.5" r="1.8" fill="#f0901e"/>
<line x1="873.5" y1="516" x2="873.5" y2="572" stroke="#1a1a1a" stroke-width="1" stroke-dasharray="2 2"/>
</g></svg>
<svg style="left:1195px;top:125px" width="80" height="70" viewBox="1195 125 80 70"><circle cx="1207.7" cy="144.5" r="7.2" fill="#5b3a42" stroke="#c0344a" stroke-width="1.3"/><circle cx="1215.5" cy="179.7" r="7.8" fill="#4a5a30" stroke="#86c41f" stroke-width="1.5"/><circle cx="1234.2" cy="178.3" r="7" fill="#3a4550" stroke="#3a6fb0" stroke-width="1.2"/><line x1="1233.8" y1="159.2" x2="1233.8" y2="147" stroke="#3d90f0" stroke-width="2"/><line x1="1233.8" y1="159.2" x2="1247" y2="144" stroke="#6e9d27" stroke-width="2"/><line x1="1233.8" y1="159.2" x2="1253" y2="169" stroke="#e0324f" stroke-width="2"/><circle cx="1233.8" cy="139" r="8.4" fill="#2f8cf5"/><circle cx="1252.3" cy="138.1" r="8.2" fill="#6e9d27"/><circle cx="1260.3" cy="173.3" r="8.4" fill="#e0324f"/><text x="1233.8" y="143.2" font-family="Liberation Sans" font-size="12" fill="#0b2240" text-anchor="middle">Z</text><text x="1252.3" y="142.3" font-family="Liberation Sans" font-size="12" fill="#1b260a" text-anchor="middle">Y</text><text x="1260.3" y="177.5" font-family="Liberation Sans" font-size="12" fill="#3d0a14" text-anchor="middle">X</text></svg>
<svg style="left:1248px;top:199.4px" width="28" height="28"><circle cx="14" cy="14" r="13.6" fill="#353535"/></svg>
<svg style="left:1248px;top:229.5px" width="28" height="28"><circle cx="14" cy="14" r="13.6" fill="#353535"/></svg>
<svg style="left:1248px;top:259.2px" width="28" height="28"><circle cx="14" cy="14" r="13.6" fill="#353535"/></svg>
<svg style="left:1248px;top:289.8px" width="28" height="28"><circle cx="14" cy="14" r="13.6" fill="#353535"/></svg>
<svg style="left:1254px;top:205px" width="16" height="16" viewBox="0 0 16 16"><circle cx="9.5" cy="6.5" r="5" fill="#e6e6e6"/><path d="M9.5 4 V9 M7 6.5 H12" stroke="#353535" stroke-width="1.2"/><path d="M6 10 L2 14" stroke="#e6e6e6" stroke-width="2" stroke-linecap="round"/></svg>
<svg style="left:1254px;top:235px" width="16" height="16" viewBox="0 0 16 16"><path d="M3 9 Q2 7 3.2 6.8 Q4.2 6.7 5 8.5 V3 Q5 2 6 2 Q7 2 7 3 V7 V1.8 Q7 1 8 1 Q9 1 9 1.8 V7 V2.5 Q9 1.6 10 1.6 Q11 1.6 11 2.5 V7.5 V4 Q11 3.2 12 3.2 Q13 3.2 13 4 V10 Q13 15 8.5 15 Q5.5 15 3 9 Z" fill="#e6e6e6"/></svg>
<svg style="left:1254px;top:265px" width="16" height="16" viewBox="0 0 16 16"><g fill="none" stroke="#e6e6e6" stroke-width="1.1"><path d="M2.5 8 Q1 8 1 6 Q1 3.5 3.5 3.5 Q5 3.5 6 5 Q7 2 10 2 Q14 2 14 5.5 Q14 8 11 8 Z"/><circle cx="10.5" cy="5" r="1.3"/><rect x="4" y="10" width="6" height="4.5"/><path d="M10 12 L14 10 V14.5 Z M2 11 V13 M1 12 H3"/></g></svg>
<svg style="left:1254px;top:296px" width="16" height="16" viewBox="0 0 16 16"><path d="M4 2 H12 L15 14 H1 Z M2.8 6 H13.2 M2 10 H14 M6.7 2 L5.7 14 M9.3 2 L10.3 14" fill="none" stroke="#e6e6e6" stroke-width="1.2"/></svg>
<div class="a" style="left:3px;top:123px;width:8px;height:15px;background:#383838;border-radius:0 4px 4px 0"></div>
<svg style="left:4px;top:126px" width="6" height="9"><path d="M0.8 0.8 L4.5 4.5 L0.8 8.2" fill="none" stroke="#8a8a8a" stroke-width="1"/></svg>
<div class="a" style="left:449px;top:123px;width:18px;height:15px;background:#383838;border-radius:4px"></div>
<svg style="left:451px;top:126px" width="14" height="9"><path d="M4.5 0.8 L1 4.5 L4.5 8.2 M9.5 0.8 L13 4.5 L9.5 8.2" fill="none" stroke="#8f8f8f" stroke-width="1"/></svg>
<div class="a" style="left:456px;top:110px;width:3px;height:40px;background:#161616;border-radius:0px;"></div>
<div class="a" style="left:1276px;top:122px;width:10px;height:16px;background:#383838;border-radius:4px 0 0 4px"></div>
<svg style="left:1278px;top:126px" width="6" height="9"><path d="M5 0.8 L1.3 4.5 L5 8.2" fill="none" stroke="#8f8f8f" stroke-width="1"/></svg>
<div class="a" style="left:1284px;top:110px;width:3px;height:40px;background:#161616;border-radius:0px;"></div>
<div class="t" style="left:468px;top:121px;color:#fff;text-shadow:1px 1px 1px rgba(0,0,0,0.8);-webkit-text-stroke:0.35px #fff;font-size:11.5px">User Perspective</div>
<div class="t" style="left:468px;top:137.5px;color:#fff;text-shadow:1px 1px 1px rgba(0,0,0,0.8);-webkit-text-stroke:0.35px #fff;font-size:11.5px">(1) Collection | </div>
<svg style="left:550px;top:137px" width="78" height="12"><g style="color:#000" transform="translate(0.8 0.8)" opacity="0.6"><use href="#kata" width="78" height="12"/></g><g style="color:#fff"><use href="#kata" width="78" height="12"/><use href="#kata" width="78" height="12" transform="translate(0.25 0)"/></g></svg>
<svg style="left:3px;top:57px" width="453" height="720" viewBox="3 57 453 720">
<path d="M196.6,360.5 L203.0,357.3 L207.8,354.1 L211.6,350.0 L219.0,351.9 L221.2,359.6 L242.9,362.8 L255.7,367.9 L262.1,377.5 L266.3,374.3 L269.2,367.9 L273.6,371.1 L274.0,387.7 L270.4,389.9 L262.8,387.7 L259.6,391.5 L260.5,416.5 L252.5,420.6 L246.8,417.1 L242.9,420.3 L237.2,412.6 L220.6,415.8 L204.6,410.7 L196.3,401.1 L194.4,381.3 L193.1,366.0 Z M204.6,359.6 L209.4,354.8 L214.8,353.2 L218.3,355.7 L219.3,361.5 L211.0,363.7 Z" fill="#a2a2a2" fill-rule="evenodd"/>
<circle cx="208" cy="395.5" r="9" fill="#9a9a9a"/><circle cx="208" cy="395.5" r="9" fill="none" stroke="#7a7a7a" stroke-width="1"/><circle cx="209" cy="396" r="3.5" fill="none" stroke="#6a6a6a" stroke-width="1.2"/>
<path d="M245,385 L260,387 L260,416 L252,420 L246,417 Z" fill="#8f8f8f"/>
<path d="M200,368 L240,372 M212,377 L250,381 M228,395 L240,405" stroke="#707070" stroke-width="1" fill="none"/>
</svg>
<div class="a" style="left:1287px;top:57px;width:264px;height:177px;background:#282828;border-radius:6px 0 0 6px;overflow:hidden">
<div class="a" style="left:0px;top:0px;width:264px;height:26px;background:#303030;border-radius:0px;"></div>
<div class="a" style="left:0px;top:48px;width:264px;height:20px;background:#2b2b2b;border-radius:0px;"></div>
<div class="a" style="left:0px;top:88px;width:264px;height:20px;background:#2b2b2b;border-radius:0px;"></div>
<div class="a" style="left:0px;top:167px;width:264px;height:10px;background:#2b2b2b;border-radius:0px;"></div>
<div class="a" style="left:0px;top:127px;width:264px;height:20px;background:#334d80;border-radius:0px;"></div>
</div>
<div class="a" style="left:1296px;top:61px;width:31px;height:18px;background:#282828;border-radius:4px;box-shadow:inset 0 0 0 1px #3a3a3a"></div>
<svg style="left:1301px;top:63px" width="14" height="14" viewBox="0 0 14 14"><g fill="#e6e6e6"><rect x="1" y="1" width="5" height="3"/><rect x="5" y="6" width="8" height="3"/><rect x="5" y="11" width="8" height="3"/><rect x="2.2" y="4" width="1.2" height="8.5"/><rect x="2.2" y="7" width="3" height="1.2"/><rect x="2.2" y="11.3" width="3" height="1.2"/></g></svg>
<svg style="left:1317px;top:69px;" width="8" height="5"><use href="#chev" width="8" height="5"/></svg>
<div class="a" style="left:1332px;top:61px;width:31px;height:18px;background:#282828;border-radius:4px;box-shadow:inset 0 0 0 1px #3a3a3a"></div>
<svg style="left:1336px;top:62px" width="15" height="15" viewBox="0 0 15 15"><g fill="none" stroke="#e6e6e6" stroke-width="1.1"><rect x="4.5" y="1" width="9.5" height="9.5"/><path d="M2.8 3 V12.2 H12 M1 5 V14 H10"/></g><path d="M5.5 9.5 L8 6 L10 8 L11.5 5.5 L13.5 9.5 Z" fill="#e6e6e6"/><circle cx="7" cy="3.8" r="1" fill="#e6e6e6"/></svg>
<svg style="left:1352px;top:69px;" width="8" height="5"><use href="#chev" width="8" height="5"/></svg>
<div class="a" style="left:1380px;top:61px;width:115px;height:18px;background:#1d1d1d;border-radius:4px;box-shadow:inset 0 0 0 1px #383838"></div>
<svg style="left:1386px;top:63px;" width="13" height="13"><use href="#search" width="13" height="13"/></svg>
<div class="t" style="left:1405px;top:65px;color:#7a7a7a;">Search</div>
<div class="a" style="left:1511px;top:61px;width:32px;height:18px;background:#282828;border-radius:4px;box-shadow:inset 0 0 0 1px #3a3a3a"></div>
<svg style="left:1515px;top:62px" width="15" height="15" viewBox="0 0 15 15"><path d="M1 1.5 H14 L9 7.5 V13.5 L6 11.5 V7.5 Z" fill="none" stroke="#e6e6e6" stroke-width="1.2"/></svg>
<svg style="left:1532px;top:69px;" width="8" height="5"><use href="#chev" width="8" height="5"/></svg>
<div class="a" style="left:1547px;top:61px;width:4px;height:18px;background:#282828;border-radius:4px 0 0 4px;"></div>
<svg style="left:1310px;top:88px;" width="14" height="14"><use href="#coll" width="14" height="14"/></svg>
<div class="t" style="left:1331px;top:90px;color:#e2e2e2;">Scene Collection</div>
<svg style="left:1313px;top:112px;" width="8" height="5"><use href="#chevdn" width="8" height="5"/></svg>
<div class="a" style="left:1327px;top:105px;width:20px;height:20px;background:#444;border-radius:5px;"></div>
<svg style="left:1330px;top:108px;" width="14" height="14"><use href="#coll" width="14" height="14"/></svg>
<div class="t" style="left:1351px;top:110px;color:#e2e2e2;">Collection</div>
<svg style="left:1490px;top:108px" width="11" height="11"><rect width="11" height="11" rx="1.5" fill="#e6e6e6"/><path d="M2.5 5.5 L4.7 8 L8.8 3" fill="none" stroke="#282828" stroke-width="1.5"/></svg>
<svg style="left:1508px;top:110px;" width="14" height="10"><use href="#eye" width="14" height="10"/></svg>
<svg style="left:1528px;top:109px;" width="14" height="12"><use href="#cam" width="14" height="12"/></svg>
<svg style="left:1508px;top:130px;" width="14" height="10"><use href="#eye" width="14" height="10"/></svg>
<svg style="left:1528px;top:129px;" width="14" height="12"><use href="#cam" width="14" height="12"/></svg>
<svg style="left:1508px;top:150px;" width="14" height="10"><use href="#eye" width="14" height="10"/></svg>
<svg style="left:1528px;top:149px;" width="14" height="12"><use href="#cam" width="14" height="12"/></svg>
<svg style="left:1508px;top:170px;" width="14" height="10"><use href="#eye" width="14" height="10"/></svg>
<svg style="left:1528px;top:169px;" width="14" height="12"><use href="#cam" width="14" height="12"/></svg>
<svg style="left:1508px;top:190px;" width="14" height="10"><use href="#eye" width="14" height="10"/></svg>
<svg style="left:1528px;top:189px;" width="14" height="12"><use href="#cam" width="14" height="12"/></svg>
<div class="a" style="left:1316px;top:129px;width:1px;height:30px;background:#555;border-radius:0px;"></div>
<svg style="left:1335px;top:131px;" width="5" height="8"><use href="#chevr" width="5" height="8"/></svg>
<svg style="left:1349px;top:127px" width="16" height="15" viewBox="0 0 16 15"><g fill="#e69b50"><circle cx="4" cy="3.5" r="3"/><circle cx="10" cy="3.5" r="3"/><rect x="2" y="6.5" width="9" height="6" rx="1"/><path d="M11 9.5 L15 7 V13 Z"/></g><circle cx="4" cy="3.5" r="1" fill="#282828"/><circle cx="10" cy="3.5" r="1" fill="#282828"/></svg>
<div class="t" style="left:1371px;top:130px;color:#e2e2e2;">Camera</div>
<div class="a" style="left:1431px;top:125px;width:20px;height:19px;background:#404040;border-radius:5px;"></div>
<svg style="left:1433px;top:127px" width="16" height="15" viewBox="0 0 16 15"><g fill="none" stroke="#24c3a0" stroke-width="1.2"><path d="M2 6 Q1 2 4 2 Q5.5 2 6.5 3.5 Q7.5 1 10.5 1 Q14 1 14 4.5 Q14 6.5 12 6.5 H3"/><circle cx="11" cy="3.8" r="1"/><rect x="4" y="8.5" width="6.5" height="5"/><path d="M10.5 11 L14.5 8.5 V13.5 Z M1.5 9 V13 M1 11 H3"/></g></svg>
<svg style="left:1335px;top:151px;" width="5" height="8"><use href="#chevr" width="5" height="8"/></svg>
<svg style="left:1350px;top:147px" width="14" height="16" viewBox="0 0 14 16"><circle cx="7" cy="6" r="5.5" fill="#e69b50"/><rect x="4" y="10" width="6" height="2" fill="#e69b50"/><rect x="4.5" y="12.8" width="5" height="1.5" fill="#e69b50"/><path d="M4.5 6 L6 8 L7 6.5 L8 8 L9.5 6" fill="none" stroke="#282828" stroke-width="0.9"/></svg>
<div class="t" style="left:1371px;top:150px;color:#e2e2e2;">Light</div>
<svg style="left:1421px;top:147px" width="14" height="16" viewBox="0 0 14 16"><circle cx="7" cy="7" r="6" fill="none" stroke="#24c3a0" stroke-width="1.2"/><circle cx="7" cy="6.5" r="1.2" fill="none" stroke="#24c3a0" stroke-width="1"/><path d="M7 8 V15" stroke="#24c3a0" stroke-width="1" stroke-dasharray="1.5 1"/></svg>
<svg style="left:1315px;top:171px;" width="5" height="8"><use href="#chevr" width="5" height="8"/></svg>
<svg style="left:1329px;top:167px" width="16" height="15" viewBox="0 0 16 15"><path d="M5 1 V8 L1.5 13 M5 8 H14" fill="none" stroke="#e69b50" stroke-width="2.6" stroke-linecap="round"/></svg>
<div class="t" style="left:1351px;top:170px;color:#e2e2e2;">root</div>
<svg style="left:1396px;top:168px" width="14" height="14" viewBox="0 0 14 14"><path d="M1.5 1.5 H12.5 L7 12.5 Z" fill="none" stroke="#e69b50" stroke-width="2.4" stroke-linejoin="round"/></svg>
<svg style="left:1315px;top:190px;" width="5" height="8"><use href="#chevr" width="5" height="8"/></svg>
<div class="a" style="left:1327px;top:185px;width:20px;height:19px;background:#5c6f94;border-radius:5px;"></div>
<svg style="left:1330px;top:187px" width="14" height="14" viewBox="0 0 14 14"><path d="M1.5 1.5 H12.5 L7 12.5 Z" fill="none" stroke="#e69b50" stroke-width="2.4" stroke-linejoin="round"/></svg>
<svg style="left:1351px;top:188px" width="78" height="12"><use href="#kata" width="78" height="12" style="color:#f5b13d"/></svg>
<svg style="left:1450px;top:186px" width="15" height="15" viewBox="0 0 15 15"><g fill="none" stroke="#24c3a0" stroke-width="1.2"><path d="M2.5 2.5 H12.5 L7.5 12.5 Z"/></g><g fill="#334d80" stroke="#24c3a0" stroke-width="1.1"><rect x="1" y="1" width="3" height="3"/><rect x="11" y="1" width="3" height="3"/><rect x="6" y="11" width="3" height="3"/></g></svg>
<div class="a" style="left:1287px;top:237px;width:264px;height:838px;background:#303030;border-radius:6px 0 0 6px;overflow:hidden">
<div class="a" style="left:0px;top:25px;width:28px;height:812px;background:#1d1d1d;border-radius:0px;"></div>
<div class="a" style="left:2px;top:254px;width:26px;height:26px;background:#303030;border-radius:5px 0 0 5px;"></div>
<div class="a" style="left:4px;top:61px;width:22px;height:1px;background:#2a2a2a;border-radius:0px;"></div>
<div class="a" style="left:4px;top:209px;width:22px;height:1px;background:#2a2a2a;border-radius:0px;"></div>
<div class="a" style="left:4px;top:245px;width:22px;height:1px;background:#2a2a2a;border-radius:0px;"></div>
<div class="a" style="left:4px;top:449px;width:22px;height:1px;background:#2a2a2a;border-radius:0px;"></div>
<div class="a" style="left:4px;top:485px;width:22px;height:1px;background:#2a2a2a;border-radius:0px;"></div>
</div>
<div class="a" style="left:1296px;top:240px;width:31px;height:18px;background:#282828;border-radius:4px;box-shadow:inset 0 0 0 1px #3a3a3a"></div>
<svg style="left:1300px;top:242px" width="15" height="14" viewBox="0 0 15 14"><rect x="1" y="1" width="13" height="5" rx="2.5" fill="#e6e6e6"/><rect x="1" y="8" width="13" height="5" rx="2.5" fill="#e6e6e6"/><rect x="8" y="2.2" width="4.5" height="2.6" rx="1" fill="#282828"/><rect x="8" y="9.2" width="4.5" height="2.6" rx="1" fill="#282828"/></svg>
<svg style="left:1317px;top:248px;" width="8" height="5"><use href="#chev" width="8" height="5"/></svg>
<div class="a" style="left:1359px;top:240px;width:113px;height:18px;background:#1d1d1d;border-radius:4px;box-shadow:inset 0 0 0 1px #383838"></div>
<svg style="left:1365px;top:242px;" width="13" height="13"><use href="#search" width="13" height="13"/></svg>
<div class="t" style="left:1384px;top:244px;color:#7a7a7a;">Search</div>
<div class="a" style="left:1527px;top:240px;width:19px;height:18px;background:#282828;border-radius:4px;box-shadow:inset 0 0 0 1px #3a3a3a"></div>
<svg style="left:1533px;top:247px;" width="8" height="5"><use href="#chev" width="8" height="5"/></svg>
<svg style="left:1294px;top:275.7px" width="16" height="16" viewBox="0 0 16 16"><rect x="2" y="1" width="1.2" height="7" fill="#ccc"/><circle cx="2.6" cy="12" r="2.3" fill="#ccc"/><rect x="2" y="9" width="1.2" height="2" fill="#ccc"/><path d="M9.5 1.5 Q8 4 10.5 5.5 V14 Q11.5 15 12.5 14 V5.5 Q15 4 13.5 1.5 V4 H9.5 Z" fill="#ccc"/></svg>
<svg style="left:1294px;top:311.3px" width="16" height="16" viewBox="0 0 16 16"><rect x="1" y="5" width="14" height="10" rx="1" fill="none" stroke="#ccc" stroke-width="1.2"/><path d="M3 5 V2 H8 V5 M12 3 V5" fill="none" stroke="#ccc" stroke-width="1.2"/><path d="M3 8 H8 M3 10.5 H8 M3 13 H8" stroke="#ccc" stroke-width="1"/><rect x="11" y="8" width="2" height="5" fill="#ccc"/></svg>
<svg style="left:1294px;top:339.6px" width="16" height="16" viewBox="0 0 16 16"><rect x="1" y="1" width="14" height="4" rx="1" fill="#ccc"/><rect x="3" y="5" width="10" height="10" fill="none" stroke="#ccc" stroke-width="1.2"/><path d="M4.5 13.5 L8 9 L11.5 13.5 Z" fill="#ccc"/></svg>
<svg style="left:1294px;top:367.4px" width="16" height="16" viewBox="0 0 16 16"><g fill="none" stroke="#ccc" stroke-width="1.1"><rect x="4.5" y="1" width="10" height="10"/><path d="M2.8 3 V12.8 H12.5 M1 5 V14.5 H10.5"/></g><path d="M5.5 10 L8.5 5.5 L10.5 8 L12 6 L14 10 Z" fill="#ccc"/></svg>
<svg style="left:1294px;top:395.3px" width="16" height="16" viewBox="0 0 16 16"><path d="M5 2 Q1 8 1.5 11 Q2 13.5 5 13.5 Q8 13.5 8.5 11 Q9 8 5 2 Z" fill="#ccc"/><circle cx="12.5" cy="3.5" r="2" fill="#ccc"/><circle cx="10.5" cy="11" r="3.8" fill="#1d1d1d" stroke="#ccc" stroke-width="1.2"/><path d="M9.5 11 L11 9.5" stroke="#ccc" stroke-width="1"/></svg>
<svg style="left:1294px;top:423.7px" width="16" height="16" viewBox="0 0 16 16"><circle cx="8" cy="8" r="5.8" fill="none" stroke="#c1535e" stroke-width="1.4"/><path d="M5 4.5 Q7 4 7.5 6 Q6.5 7.5 5 7 Q4 6 5 4.5 Z M8 8.5 Q10.5 8 11 10 Q10 12 8.5 11.5 Q7.5 10 8 8.5 Z" fill="#c1535e"/><path d="M2 14 L14.5 1.5" stroke="#c1535e" stroke-width="1.3"/></svg>
<svg style="left:1294px;top:460.3px" width="16" height="16" viewBox="0 0 16 16"><rect x="1.5" y="2" width="13" height="3.5" fill="none" stroke="#ccc" stroke-width="1.2"/><rect x="2.5" y="5.5" width="11" height="8.5" fill="none" stroke="#ccc" stroke-width="1.2"/><rect x="6" y="7.5" width="4" height="1.4" fill="#ccc"/></svg>
<svg style="left:1294px;top:495.9px" width="16" height="16" viewBox="0 0 16 16"><path d="M1 4.5 V1 H4.5 M11.5 1 H15 V4.5 M15 11.5 V15 H11.5 M4.5 15 H1 V11.5" fill="none" stroke="#e69b50" stroke-width="1.2"/><rect x="3.5" y="3.5" width="9" height="9" fill="#e69b50"/></svg>
<svg style="left:1294px;top:523.3px" width="16" height="16" viewBox="0 0 16 16"><path d="M3 13 L9 7" stroke="#6b8fd8" stroke-width="3.2" stroke-linecap="round"/><path d="M8 8 A4.3 4.3 0 0 1 13.2 2 L10.8 4.4 L11.8 5.6 L14.3 3.3 A4.3 4.3 0 0 1 8 8 Z" fill="#6b8fd8" stroke="#6b8fd8" stroke-width="1.2" stroke-linejoin="round"/></svg>
<svg style="left:1294px;top:551.6px" width="16" height="16" viewBox="0 0 16 16"><g fill="#6b8fd8"><circle cx="3" cy="3" r="2.2"/><circle cx="3" cy="13" r="1.6"/><circle cx="13.5" cy="13" r="2.2"/><circle cx="14" cy="3" r="1.5"/></g><path d="M3 3 V13 M3 3 H14 M3 3 L13.5 13" stroke="#6b8fd8" stroke-width="1.2"/></svg>
<svg style="left:1294px;top:579.9px" width="16" height="16" viewBox="0 0 16 16"><circle cx="7" cy="9" r="6" fill="none" stroke="#6b8fd8" stroke-width="1.3" stroke-dasharray="30 8"/><circle cx="7" cy="9" r="3" fill="#6b8fd8"/><circle cx="13" cy="3" r="2" fill="#6b8fd8"/></svg>
<svg style="left:1294px;top:607.3px" width="16" height="16" viewBox="0 0 16 16"><path d="M3 12.5 Q0.5 9 3.5 6 L9 1.8 Q12.5 0 14 2.5 Q15.5 5 13 8 L8.5 13 Q5.5 15.5 3 12.5 Z" fill="none" stroke="#6b8fd8" stroke-width="1.2"/><circle cx="6.3" cy="9.7" r="2.8" fill="none" stroke="#6b8fd8" stroke-width="1.3"/><circle cx="6.3" cy="9.7" r="1" fill="#6b8fd8"/><circle cx="11.5" cy="4" r="0.9" fill="#6b8fd8"/></svg>
<svg style="left:1294px;top:634.7px" width="16" height="16" viewBox="0 0 16 16"><g fill="none" stroke="#24c3a0" stroke-width="1.4"><path d="M2.5 2.5 H13.5 L8 13.5 Z"/></g><g fill="#1d1d1d" stroke="#24c3a0" stroke-width="1.2"><rect x="1" y="1" width="3" height="3"/><rect x="12" y="1" width="3" height="3"/><rect x="6.5" y="12" width="3" height="3"/></g></svg>
<svg style="left:1294px;top:663.5px" width="16" height="16" viewBox="0 0 16 16"><circle cx="8" cy="8" r="6.8" fill="#c1535e"/><path d="M8 2 V8 H14 A6 6 0 0 0 8 2 Z" fill="#1d1d1d"/><path d="M2.3 9.5 Q4 8 8 8.5 Q9 12 7 14 Q3 13.5 2.3 9.5 Z" fill="#1d1d1d"/></svg>
<svg style="left:1294px;top:699.6px" width="16" height="16" viewBox="0 0 16 16"><rect x="1" y="1" width="14" height="14" fill="#c1535e"/><g fill="#1d1d1d"><rect x="5.3" y="2.0" width="2.8" height="2.8"/><rect x="10.9" y="2.0" width="2.8" height="2.8"/><rect x="2.5" y="4.8" width="2.8" height="2.8"/><rect x="8.1" y="4.8" width="2.8" height="2.8"/><rect x="5.3" y="7.6" width="2.8" height="2.8"/><rect x="10.9" y="7.6" width="2.8" height="2.8"/><rect x="2.5" y="10.4" width="2.8" height="2.8"/><rect x="8.1" y="10.4" width="2.8" height="2.8"/></g></svg>
<svg style="left:1326px;top:272px;" width="15" height="15"><use href="#objsq" width="15" height="15"/></svg>
<svg style="left:1350px;top:274px" width="76" height="12"><use href="#kata" width="76" height="12" style="color:#e6e6e6"/></svg>
<svg style="left:1530px;top:272px" width="15" height="15" viewBox="0 0 15 15"><path d="M9 1 L14 6 L12.5 7 L11 6.5 L8 9.5 L8.5 12 L7.5 13 L2 7.5 L3 6.5 L5.5 7 L8.5 4 L8 2.5 Z" fill="none" stroke="#999" stroke-width="1.1"/><path d="M4.5 10.5 L1 14" stroke="#999" stroke-width="1.1"/></svg>
<div class="a" style="left:1324px;top:306px;width:222px;height:19px;background:#1d1d1d;border-radius:4px;box-shadow:inset 0 0 0 1px #2a2a2a"></div>
<div class="a" style="left:1324px;top:306px;width:30px;height:19px;background:#282828;border-radius:4px 0 0 4px;"></div>
<div class="a" style="left:1354px;top:306px;width:1px;height:19px;background:#3a3a3a;border-radius:0px;"></div>
<svg style="left:1328px;top:308px;" width="15" height="15"><use href="#objsq" width="15" height="15"/></svg>
<svg style="left:1344px;top:314px;" width="7" height="5"><use href="#chev" width="7" height="5"/></svg>
<svg style="left:1363px;top:310px" width="76" height="12"><use href="#kata" width="76" height="12" style="color:#e6e6e6"/></svg>
<div class="a" style="left:1323px;top:336px;width:224px;height:301px;background:#3d3d3d;border-radius:5px;"></div>
<svg style="left:1332px;top:347px;" width="8" height="5"><use href="#chevdn" width="8" height="5"/></svg>
<div class="t" style="left:1345px;top:344px;color:#e2e2e2;">Transform</div>
<svg style="left:1530px;top:346px;" width="12" height="5"><use href="#dots" width="12" height="5"/></svg>
<div class="t" style="left:1300px;top:373.5px;width:102px;text-align:right;color:#d0d0d0">Location X</div>
<div class="a" style="left:1412px;top:370px;width:86px;height:18px;background:#545454;border-radius:4px 4px 0px 0px;"></div>
<div class="t" style="left:1412px;top:373.5px;width:86px;text-align:center;color:#e6e6e6">0.086847 m</div>
<svg style="left:1502px;top:372px;" width="14" height="14"><use href="#lock" width="14" height="14"/></svg>
<svg style="left:1526px;top:376.5px" width="5" height="5"><circle cx="2.5" cy="2.5" r="2.2" fill="#cfcfcf"/></svg>
<div class="t" style="left:1300px;top:393.0px;width:102px;text-align:right;color:#d0d0d0">Y</div>
<div class="a" style="left:1412px;top:389px;width:86px;height:19px;background:#545454;border-radius:0px 0px 0px 0px;"></div>
<div class="t" style="left:1412px;top:393.0px;width:86px;text-align:center;color:#e6e6e6">-0.024399</div>
<svg style="left:1502px;top:391px;" width="14" height="14"><use href="#lock" width="14" height="14"/></svg>
<svg style="left:1526px;top:396.0px" width="5" height="5"><circle cx="2.5" cy="2.5" r="2.2" fill="#cfcfcf"/></svg>
<div class="t" style="left:1300px;top:413.0px;width:102px;text-align:right;color:#d0d0d0">Z</div>
<div class="a" style="left:1412px;top:409px;width:86px;height:19px;background:#545454;border-radius:0px 0px 4px 4px;"></div>
<div class="t" style="left:1412px;top:413.0px;width:86px;text-align:center;color:#e6e6e6">0.066153 m</div>
<svg style="left:1502px;top:411px;" width="14" height="14"><use href="#lock" width="14" height="14"/></svg>
<svg style="left:1526px;top:416.0px" width="5" height="5"><circle cx="2.5" cy="2.5" r="2.2" fill="#cfcfcf"/></svg>
<div class="t" style="left:1300px;top:438.5px;width:102px;text-align:right;color:#d0d0d0">Rotation W</div>
<div class="a" style="left:1412px;top:435px;width:86px;height:18px;background:#545454;border-radius:4px 4px 0px 0px;"></div>
<div class="t" style="left:1412px;top:438.5px;width:86px;text-align:center;color:#e6e6e6">-0.047</div>
<svg style="left:1502px;top:437px;" width="14" height="14"><use href="#lock" width="14" height="14"/></svg>
<svg style="left:1526px;top:441.5px" width="5" height="5"><circle cx="2.5" cy="2.5" r="2.2" fill="#cfcfcf"/></svg>
<div class="t" style="left:1300px;top:458.0px;width:102px;text-align:right;color:#d0d0d0">X</div>
<div class="a" style="left:1412px;top:454px;width:86px;height:19px;background:#545454;border-radius:0px 0px 0px 0px;"></div>
<div class="t" style="left:1412px;top:458.0px;width:86px;text-align:center;color:#e6e6e6">0.798</div>
<svg style="left:1502px;top:456px;" width="14" height="14"><use href="#lock" width="14" height="14"/></svg>
<svg style="left:1526px;top:461.0px" width="5" height="5"><circle cx="2.5" cy="2.5" r="2.2" fill="#cfcfcf"/></svg>
<div class="t" style="left:1300px;top:478.0px;width:102px;text-align:right;color:#d0d0d0">Y</div>
<div class="a" style="left:1412px;top:474px;width:86px;height:19px;background:#545454;border-radius:0px 0px 0px 0px;"></div>
<div class="t" style="left:1412px;top:478.0px;width:86px;text-align:center;color:#e6e6e6">-0.043</div>
<svg style="left:1502px;top:476px;" width="14" height="14"><use href="#lock" width="14" height="14"/></svg>
<svg style="left:1526px;top:481.0px" width="5" height="5"><circle cx="2.5" cy="2.5" r="2.2" fill="#cfcfcf"/></svg>
<div class="t" style="left:1300px;top:498.0px;width:102px;text-align:right;color:#d0d0d0">Z</div>
<div class="a" style="left:1412px;top:494px;width:86px;height:19px;background:#545454;border-radius:0px 0px 4px 4px;"></div>
<div class="t" style="left:1412px;top:498.0px;width:86px;text-align:center;color:#e6e6e6">-0.600</div>
<svg style="left:1502px;top:496px;" width="14" height="14"><use href="#lock" width="14" height="14"/></svg>
<svg style="left:1526px;top:501.0px" width="5" height="5"><circle cx="2.5" cy="2.5" r="2.2" fill="#cfcfcf"/></svg>
<div class="t" style="left:1300px;top:548.5px;width:102px;text-align:right;color:#d0d0d0">Scale X</div>
<div class="a" style="left:1412px;top:545px;width:86px;height:18px;background:#545454;border-radius:4px 4px 0px 0px;"></div>
<div class="t" style="left:1412px;top:548.5px;width:86px;text-align:center;color:#e6e6e6">0.080</div>
<svg style="left:1502px;top:547px;" width="14" height="14"><use href="#lock" width="14" height="14"/></svg>
<svg style="left:1526px;top:551.5px" width="5" height="5"><circle cx="2.5" cy="2.5" r="2.2" fill="#cfcfcf"/></svg>
<div class="t" style="left:1300px;top:568.0px;width:102px;text-align:right;color:#d0d0d0">Y</div>
<div class="a" style="left:1412px;top:564px;width:86px;height:19px;background:#545454;border-radius:0px 0px 0px 0px;"></div>
<div class="t" style="left:1412px;top:568.0px;width:86px;text-align:center;color:#e6e6e6">0.080</div>
<svg style="left:1502px;top:566px;" width="14" height="14"><use href="#lock" width="14" height="14"/></svg>
<svg style="left:1526px;top:571.0px" width="5" height="5"><circle cx="2.5" cy="2.5" r="2.2" fill="#cfcfcf"/></svg>
<div class="t" style="left:1300px;top:588.0px;width:102px;text-align:right;color:#d0d0d0">Z</div>
<div class="a" style="left:1412px;top:584px;width:86px;height:19px;background:#545454;border-radius:0px 0px 4px 4px;"></div>
<div class="t" style="left:1412px;top:588.0px;width:86px;text-align:center;color:#e6e6e6">0.080</div>
<svg style="left:1502px;top:586px;" width="14" height="14"><use href="#lock" width="14" height="14"/></svg>
<svg style="left:1526px;top:591.0px" width="5" height="5"><circle cx="2.5" cy="2.5" r="2.2" fill="#cfcfcf"/></svg>
<div class="t" style="left:1300px;top:523.5px;width:102px;text-align:right;color:#d0d0d0">Mode</div>
<div class="a" style="left:1412px;top:520px;width:86px;height:18px;background:#282828;border-radius:4px;box-shadow:inset 0 0 0 1px #2e2e2e"></div>
<div class="t" style="left:1419px;top:524px;color:#e6e6e6;">Quaternion...</div>
<svg style="left:1488px;top:527px;" width="8" height="5"><use href="#chev" width="8" height="5"/></svg>
<svg style="left:1526px;top:526.5px" width="5" height="5"><circle cx="2.5" cy="2.5" r="2.2" fill="#cfcfcf"/></svg>
<svg style="left:1348px;top:620.5px;" width="6" height="9"><use href="#chevr" width="6" height="9"/></svg>
<div class="t" style="left:1359px;top:620px;color:#e2e2e2;">Delta Transform</div>
<div class="a" style="left:1323px;top:640px;width:224px;height:24px;background:#3d3d3d;border-radius:5px;"></div>
<svg style="left:1334px;top:647.5px;" width="6" height="9"><use href="#chevr" width="6" height="9"/></svg>
<div class="t" style="left:1345px;top:647px;color:#e2e2e2;">Relations</div>
<svg style="left:1530px;top:649px;" width="12" height="5"><use href="#dots" width="12" height="5"/></svg>
<div class="a" style="left:1323px;top:667px;width:224px;height:24px;background:#3d3d3d;border-radius:5px;"></div>
<svg style="left:1334px;top:674.5px;" width="6" height="9"><use href="#chevr" width="6" height="9"/></svg>
<div class="t" style="left:1345px;top:674px;color:#e2e2e2;">Collections</div>
<svg style="left:1530px;top:676px;" width="12" height="5"><use href="#dots" width="12" height="5"/></svg>
<div class="a" style="left:1323px;top:694px;width:224px;height:24px;background:#3d3d3d;border-radius:5px;"></div>
<svg style="left:1334px;top:701.5px;" width="6" height="9"><use href="#chevr" width="6" height="9"/></svg>
<div class="t" style="left:1345px;top:701px;color:#e2e2e2;">Instancing</div>
<svg style="left:1530px;top:703px;" width="12" height="5"><use href="#dots" width="12" height="5"/></svg>
<div class="a" style="left:1323px;top:721px;width:224px;height:24px;background:#3d3d3d;border-radius:5px;"></div>
<svg style="left:1334px;top:728.5px;" width="6" height="9"><use href="#chevr" width="6" height="9"/></svg>
<div class="t" style="left:1345px;top:728px;color:#e2e2e2;">Motion Paths</div>
<svg style="left:1530px;top:730px;" width="12" height="5"><use href="#dots" width="12" height="5"/></svg>
<div class="a" style="left:1323px;top:748px;width:224px;height:24px;background:#3d3d3d;border-radius:5px;"></div>
<svg style="left:1334px;top:755.5px;" width="6" height="9"><use href="#chevr" width="6" height="9"/></svg>
<div class="t" style="left:1345px;top:755px;color:#e2e2e2;">Visibility</div>
<svg style="left:1530px;top:757px;" width="12" height="5"><use href="#dots" width="12" height="5"/></svg>
<div class="a" style="left:1323px;top:775px;width:224px;height:24px;background:#3d3d3d;border-radius:5px;"></div>
<svg style="left:1334px;top:782.5px;" width="6" height="9"><use href="#chevr" width="6" height="9"/></svg>
<div class="t" style="left:1345px;top:782px;color:#e2e2e2;">Viewport Display</div>
<svg style="left:1530px;top:784px;" width="12" height="5"><use href="#dots" width="12" height="5"/></svg>
<div class="a" style="left:1323px;top:802px;width:224px;height:24px;background:#3d3d3d;border-radius:5px;"></div>
<svg style="left:1334px;top:809.5px;" width="6" height="9"><use href="#chevr" width="6" height="9"/></svg>
<div class="t" style="left:1345px;top:809px;color:#e2e2e2;">Line Art</div>
<svg style="left:1530px;top:811px;" width="12" height="5"><use href="#dots" width="12" height="5"/></svg>
<div class="a" style="left:1323px;top:829px;width:224px;height:24px;background:#3d3d3d;border-radius:5px;"></div>
<svg style="left:1334px;top:836.5px;" width="6" height="9"><use href="#chevr" width="6" height="9"/></svg>
<div class="t" style="left:1345px;top:836px;color:#e2e2e2;">Custom Properties</div>
<svg style="left:1530px;top:838px;" width="12" height="5"><use href="#dots" width="12" height="5"/></svg>
<div class="a" style="left:3px;top:780px;width:1281px;height:268px;background:#1e1e1e;border-radius:6px;overflow:hidden">
<div class="a" style="left:0px;top:0px;width:1281px;height:25px;background:#303030;border-radius:0px;"></div>
</div>
<div class="a" style="left:11px;top:784px;width:30px;height:18px;background:#282828;border-radius:4px;box-shadow:inset 0 0 0 1px #3a3a3a"></div>
<svg style="left:15px;top:785px;" width="16" height="16"><use href="#edds" width="16" height="16"/></svg>
<svg style="left:32px;top:791px;" width="8" height="5"><use href="#chev" width="8" height="5"/></svg>
<div class="a" style="left:48px;top:784px;width:129px;height:18px;background:#282828;border-radius:4px;box-shadow:inset 0 0 0 1px #3a3a3a"></div>
<svg style="left:52px;top:785px;" width="16" height="16"><use href="#edds" width="16" height="16"/></svg>
<div class="t" style="left:73px;top:788px;color:#e2e2e2;">Dope Sheet</div>
<svg style="left:166px;top:791px;" width="8" height="5"><use href="#chev" width="8" height="5"/></svg>
<div class="t" style="left:189px;top:788px;color:#e2e2e2;">View</div>
<div class="t" style="left:229px;top:788px;color:#e2e2e2;">Select</div>
<div class="t" style="left:276px;top:788px;color:#e2e2e2;">Marker</div>
<div class="t" style="left:327px;top:788px;color:#e2e2e2;">Channel</div>
<div class="t" style="left:384px;top:788px;color:#e2e2e2;">Key</div>
<div class="a" style="left:1080px;top:784px;width:58px;height:18px;background:#545454;border-radius:4px;box-shadow:inset 0 0 0 1px #3a3a3a"></div>
<div class="a" style="left:1080px;top:784px;width:19px;height:18px;background:#4772b3;border-radius:4px 0 0 4px;"></div>
<svg style="left:1082px;top:785px;" width="16" height="16"><use href="#cursorsel" width="16" height="16"/></svg>
<svg style="left:1101px;top:785px" width="16" height="16" viewBox="0 0 16 16"><path d="M1.5 4.5 V1.5 H4.5 M11.5 1.5 H14.5 V4.5 M14.5 11.5 V14.5 H11.5 M4.5 14.5 H1.5 V11.5" fill="none" stroke="#e6e6e6" stroke-width="1.3"/><rect x="4" y="4" width="8" height="8" fill="none" stroke="#e6e6e6" stroke-width="1.1" stroke-dasharray="2 1.5"/></svg>
<div class="a" style="left:1118px;top:784px;width:1px;height:18px;background:#3a3a3a;border-radius:0px;"></div>
<div class="a" style="left:1099px;top:784px;width:1px;height:18px;background:#3a3a3a;border-radius:0px;"></div>
<svg style="left:1120px;top:785px" width="16" height="16" viewBox="0 0 16 16"><path d="M8 1 L15 14.5 H1 Z" fill="#e6e6e6"/><rect x="7.2" y="5" width="1.6" height="5.5" fill="#545454"/><rect x="7.2" y="11.5" width="1.6" height="1.6" fill="#545454"/></svg>
<div class="a" style="left:1144px;top:784px;width:32px;height:18px;background:#282828;border-radius:4px;box-shadow:inset 0 0 0 1px #3a3a3a"></div>
<svg style="left:1148px;top:785px" width="15" height="15" viewBox="0 0 15 15"><path d="M1 1.5 H14 L9 7.5 V13.5 L6 11.5 V7.5 Z" fill="none" stroke="#e6e6e6" stroke-width="1.2"/></svg>
<svg style="left:1165px;top:791px;" width="8" height="5"><use href="#chev" width="8" height="5"/></svg>
<div class="a" style="left:1182px;top:784px;width:38px;height:18px;background:#282828;border-radius:4px;box-shadow:inset 0 0 0 1px #3a3a3a"></div>
<div class="a" style="left:1182px;top:784px;width:18px;height:18px;background:#4772b3;border-radius:4px 0 0 4px;"></div>
<svg style="left:1183px;top:785px" width="16" height="16" viewBox="0 0 16 16"><path d="M2.2 13.5 V7.3 A5.8 5.8 0 0 1 13.8 7.3 V13.5 H10.4 V7.3 A2.4 2.4 0 0 0 5.6 7.3 V13.5 Z" fill="#fff" transform="rotate(45 8 8) translate(0.5 -0.5)"/><path d="M1 11.5 L3.5 14 M1 14.5 L4 14.5 V11.5" fill="none" stroke="#fff" stroke-width="1.1"/></svg>
<svg style="left:1206px;top:791px;" width="8" height="5"><use href="#chev" width="8" height="5"/></svg>
<div class="a" style="left:1227px;top:784px;width:51px;height:18px;background:#282828;border-radius:4px;box-shadow:inset 0 0 0 1px #3a3a3a"></div>
<div class="a" style="left:1227px;top:784px;width:18px;height:18px;background:#484848;border-radius:4px 0 0 4px;"></div>
<svg style="left:1228px;top:785px;" width="16" height="16"><use href="#propdot" width="16" height="16"/></svg>
<svg style="left:1249px;top:785px;" width="15" height="15"><use href="#falloff" width="15" height="15"/></svg>
<svg style="left:1268px;top:791px;" width="8" height="5"><use href="#chevd" width="8" height="5"/></svg>
<div class="a" style="left:5px;top:808px;width:173px;height:18px;background:#1d1d1d;border-radius:4px 0 0 4px;box-shadow:inset 0 0 0 1px #353535"></div>
<svg style="left:9px;top:810px;" width="13" height="13"><use href="#search" width="13" height="13"/></svg>
<div class="t" style="left:29px;top:811px;color:#7a7a7a;">Search</div>
<div class="a" style="left:177px;top:808px;width:23px;height:18px;background:#545454;border-radius:0 4px 4px 0;"></div>
<svg style="left:181px;top:812px" width="15" height="9" viewBox="0 0 15 9"><path d="M1 4.5 H14 M4.5 1 L1 4.5 L4.5 8 M10.5 1 L14 4.5 L10.5 8" fill="none" stroke="#e6e6e6" stroke-width="1.2"/></svg>
<div class="a" style="left:3px;top:830px;width:199px;height:18px;background:#4b2526;border-radius:6px 0 0 6px;"></div>
<svg style="left:5px;top:835px;" width="10" height="6"><use href="#chevdn" width="10" height="6"/></svg>
<div class="t" style="left:22px;top:833px;color:#e0d0d0;">Summary</div>
<div class="a" style="left:202px;top:805px;width:862px;height:23px;background:#1d1d1d;border-radius:0px;"></div>
<div class="a" style="left:202px;top:828px;width:30px;height:218px;background:#222222;border-radius:0px;"></div>
<div class="a" style="left:232px;top:828px;width:800px;height:218px;background:#303030;border-radius:0px;"></div>
<div class="a" style="left:1032px;top:828px;width:32px;height:218px;background:#232323;border-radius:0px;"></div>
<div class="a" style="left:202px;top:828px;width:30px;height:2px;background:#252525;border-radius:0px;"></div>
<div class="a" style="left:232px;top:828px;width:800px;height:2px;background:#353535;border-radius:0px;"></div>
<div class="a" style="left:1032px;top:828px;width:32px;height:2px;background:#262626;border-radius:0px;"></div>
<div class="a" style="left:202px;top:830px;width:30px;height:16px;background:#332223;border-radius:0px;"></div>
<div class="a" style="left:232px;top:830px;width:800px;height:16px;background:#3d2b2c;border-radius:0px;"></div>
<div class="a" style="left:1032px;top:830px;width:32px;height:16px;background:#302223;border-radius:0px;"></div>
<div class="a" style="left:230px;top:828px;width:1px;height:218px;background:#1b1b1b;border-radius:0px;"></div>
<div class="a" style="left:262px;top:828px;width:1px;height:218px;background:#282828;border-radius:0px;"></div>
<div class="a" style="left:294px;top:828px;width:1px;height:218px;background:#1b1b1b;border-radius:0px;"></div>
<div class="a" style="left:326px;top:828px;width:1px;height:218px;background:#282828;border-radius:0px;"></div>
<div class="a" style="left:358px;top:828px;width:1px;height:218px;background:#1b1b1b;border-radius:0px;"></div>
<div class="a" style="left:391px;top:828px;width:1px;height:218px;background:#282828;border-radius:0px;"></div>
<div class="a" style="left:423px;top:828px;width:1px;height:218px;background:#1b1b1b;border-radius:0px;"></div>
<div class="a" style="left:455px;top:828px;width:1px;height:218px;background:#282828;border-radius:0px;"></div>
<div class="a" style="left:487px;top:828px;width:1px;height:218px;background:#1b1b1b;border-radius:0px;"></div>
<div class="a" style="left:519px;top:828px;width:1px;height:218px;background:#282828;border-radius:0px;"></div>
<div class="a" style="left:551px;top:828px;width:1px;height:218px;background:#1b1b1b;border-radius:0px;"></div>
<div class="a" style="left:583px;top:828px;width:1px;height:218px;background:#282828;border-radius:0px;"></div>
<div class="a" style="left:615px;top:828px;width:1px;height:218px;background:#1b1b1b;border-radius:0px;"></div>
<div class="a" style="left:647px;top:828px;width:1px;height:218px;background:#282828;border-radius:0px;"></div>
<div class="a" style="left:679px;top:828px;width:1px;height:218px;background:#1b1b1b;border-radius:0px;"></div>
<div class="a" style="left:711px;top:828px;width:1px;height:218px;background:#282828;border-radius:0px;"></div>
<div class="a" style="left:743px;top:828px;width:1px;height:218px;background:#1b1b1b;border-radius:0px;"></div>
<div class="a" style="left:775px;top:828px;width:1px;height:218px;background:#282828;border-radius:0px;"></div>
<div class="a" style="left:807px;top:828px;width:1px;height:218px;background:#1b1b1b;border-radius:0px;"></div>
<div class="a" style="left:840px;top:828px;width:1px;height:218px;background:#282828;border-radius:0px;"></div>
<div class="a" style="left:872px;top:828px;width:1px;height:218px;background:#1b1b1b;border-radius:0px;"></div>
<div class="a" style="left:904px;top:828px;width:1px;height:218px;background:#282828;border-radius:0px;"></div>
<div class="a" style="left:936px;top:828px;width:1px;height:218px;background:#1b1b1b;border-radius:0px;"></div>
<div class="a" style="left:968px;top:828px;width:1px;height:218px;background:#282828;border-radius:0px;"></div>
<div class="a" style="left:1000px;top:828px;width:1px;height:218px;background:#1b1b1b;border-radius:0px;"></div>
<div class="a" style="left:1032px;top:828px;width:1px;height:218px;background:#282828;border-radius:0px;"></div>
<div class="a" style="left:1032px;top:828px;width:1px;height:218px;background:#111111;border-radius:0px;"></div>
<div class="t" style="left:275.34px;top:811px;width:40px;text-align:center;color:#c8c8c8">20</div>
<div class="t" style="left:339.48px;top:811px;width:40px;text-align:center;color:#c8c8c8">40</div>
<div class="t" style="left:403.62px;top:811px;width:40px;text-align:center;color:#c8c8c8">60</div>
<div class="t" style="left:467.76px;top:811px;width:40px;text-align:center;color:#c8c8c8">80</div>
<div class="t" style="left:531.9px;top:811px;width:40px;text-align:center;color:#c8c8c8">100</div>
<div class="t" style="left:596.04px;top:811px;width:40px;text-align:center;color:#c8c8c8">120</div>
<div class="t" style="left:660.18px;top:811px;width:40px;text-align:center;color:#c8c8c8">140</div>
<div class="t" style="left:724.3199999999999px;top:811px;width:40px;text-align:center;color:#c8c8c8">160</div>
<div class="t" style="left:788.46px;top:811px;width:40px;text-align:center;color:#c8c8c8">180</div>
<div class="t" style="left:852.5999999999999px;top:811px;width:40px;text-align:center;color:#c8c8c8">200</div>
<div class="t" style="left:916.74px;top:811px;width:40px;text-align:center;color:#c8c8c8">220</div>
<div class="t" style="left:980.8799999999999px;top:811px;width:40px;text-align:center;color:#c8c8c8">240</div>
<div class="a" style="left:233px;top:824px;width:2px;height:224px;background:#4a7ac0;border-radius:0px;"></div>
<div class="a" style="left:222px;top:808px;width:25px;height:17px;background:#4772b3;border-radius:5px;"></div>
<div class="t" style="left:222px;top:811px;width:25px;text-align:center;color:#f0f0f0">1</div>
<svg style="left:210px;top:1036px" width="850" height="10"><rect x="1" y="1.5" width="846" height="8" rx="4" fill="#545454"/><circle cx="5" cy="5.5" r="3.2" fill="#2b2b2b" stroke="#545454" stroke-width="1"/><circle cx="843" cy="5.5" r="3.2" fill="#2b2b2b" stroke="#545454" stroke-width="1"/></svg>
<div class="a" style="left:1060px;top:815px;width:3px;height:212px;background:#3a3a3a;border-radius:2px;"></div>
<div class="a" style="left:1278px;top:815px;width:3px;height:160px;background:#363636;border-radius:2px;"></div>
<div class="a" style="left:1064px;top:805px;width:220px;height:243px;background:#1e1e1e;border-radius:0px;"></div>
<div class="a" style="left:1064px;top:805px;width:1px;height:241px;background:#181818;border-radius:0px;"></div>
<div class="a" style="left:1278px;top:815px;width:3px;height:160px;background:#363636;border-radius:2px;"></div>
<div class="a" style="left:1060px;top:815px;width:3px;height:212px;background:#3a3a3a;border-radius:2px;"></div>
<div class="a" style="left:233px;top:1036px;width:2px;height:12px;background:#4a7ac0;border-radius:0px;"></div>
<div class="a" style="left:3px;top:1051px;width:1281px;height:24px;background:#303030;border-radius:6px;"></div>
<div class="a" style="left:10px;top:1054px;width:31px;height:19px;background:#282828;border-radius:4px;box-shadow:inset 0 0 0 1px #3a3a3a"></div>
<svg style="left:14px;top:1056px" width="15" height="15" viewBox="0 0 15 15"><circle cx="7.5" cy="7.5" r="6.8" fill="#e6e6e6"/><path d="M9.5 3.5 L6 7.5 L9.5 11.5" fill="none" stroke="#303030" stroke-width="1.8"/></svg>
<svg style="left:31px;top:1061px;" width="8" height="5"><use href="#chev" width="8" height="5"/></svg>
<div class="a" style="left:48px;top:1054px;width:131px;height:19px;background:#282828;border-radius:4px;box-shadow:inset 0 0 0 1px #3a3a3a"></div>
<div class="a" style="left:118px;top:1054px;width:1px;height:19px;background:#3a3a3a;border-radius:0px;"></div>
<div class="t" style="left:55px;top:1059px;color:#e2e2e2;">Playback</div>
<svg style="left:108px;top:1061px;" width="8" height="5"><use href="#chev" width="8" height="5"/></svg>
<div class="t" style="left:126px;top:1059px;color:#e2e2e2;">Keying</div>
<svg style="left:168px;top:1061px;" width="8" height="5"><use href="#chev" width="8" height="5"/></svg>
<div class="t" style="left:188px;top:1059px;color:#e2e2e2;">View</div>
<div class="t" style="left:228px;top:1059px;color:#e2e2e2;">Marker</div>
<div class="a" style="left:551px;top:1054px;width:38px;height:19px;background:#2c2c2c;border-radius:4px;box-shadow:inset 0 0 0 1px #333"></div>
<div class="a" style="left:551px;top:1054px;width:19px;height:19px;background:#545454;border-radius:4px 0 0 4px;"></div>
<svg style="left:553px;top:1057px" width="14" height="14"><circle cx="7" cy="7" r="5.5" fill="none" stroke="#e6e6e6" stroke-width="1.1"/></svg>
<svg style="left:575px;top:1062px;" width="8" height="5"><use href="#chevd" width="8" height="5"/></svg>
<div class="a" style="left:595px;top:1054px;width:119px;height:19px;background:#545454;border-radius:4px;"></div>
<div class="a" style="left:615px;top:1054px;width:1px;height:19px;background:#484848;border-radius:0px;"></div>
<div class="a" style="left:635px;top:1054px;width:1px;height:19px;background:#484848;border-radius:0px;"></div>
<div class="a" style="left:654px;top:1054px;width:1px;height:19px;background:#484848;border-radius:0px;"></div>
<div class="a" style="left:674px;top:1054px;width:1px;height:19px;background:#484848;border-radius:0px;"></div>
<div class="a" style="left:694px;top:1054px;width:1px;height:19px;background:#484848;border-radius:0px;"></div>
<svg style="left:597px;top:1056px" width="15" height="15" viewBox="0 0 15 15"><rect x="2" y="3" width="1.6" height="9" fill="#e6e6e6"/><path d="M12 3 V12 L4.5 7.5 Z" fill="#e6e6e6"/></svg>
<svg style="left:617px;top:1056px" width="15" height="15" viewBox="0 0 15 15"><path d="M5 3 L9 7.5 L5 12 L1 7.5 Z" fill="#e6e6e6"/><path d="M14 3.5 V11.5 L9.5 7.5 Z" fill="#e6e6e6"/></svg>
<svg style="left:637px;top:1056px" width="15" height="15" viewBox="0 0 15 15"><path d="M12 2.5 V12.5 L3 7.5 Z" fill="#e6e6e6"/></svg>
<svg style="left:656px;top:1056px" width="15" height="15" viewBox="0 0 15 15"><path d="M3 2.5 V12.5 L12 7.5 Z" fill="#e6e6e6"/></svg>
<svg style="left:676px;top:1056px" width="15" height="15" viewBox="0 0 15 15"><path d="M1 3.5 V11.5 L5.5 7.5 Z" fill="#e6e6e6"/><path d="M10 3 L14 7.5 L10 12 L6 7.5 Z" fill="#e6e6e6"/></svg>
<svg style="left:696px;top:1056px" width="15" height="15" viewBox="0 0 15 15"><path d="M3 3 V12 L10.5 7.5 Z" fill="#e6e6e6"/><rect x="11.4" y="3" width="1.6" height="9" fill="#e6e6e6"/></svg>
<div class="a" style="left:1004px;top:1054px;width:73px;height:19px;background:#545454;border-radius:4px;"></div>
<div class="t" style="left:1004px;top:1058px;width:73px;text-align:center;color:#e6e6e6">1</div>
<div class="a" style="left:1084px;top:1054px;width:192px;height:19px;background:#545454;border-radius:4px;"></div>
<div class="a" style="left:1102px;top:1054px;width:1px;height:19px;background:#484848;border-radius:0px;"></div>
<div class="a" style="left:1191px;top:1054px;width:1px;height:19px;background:#484848;border-radius:0px;"></div>
<svg style="left:1086px;top:1056px" width="15" height="15" viewBox="0 0 15 15"><circle cx="7" cy="8.5" r="5.3" fill="none" stroke="#e6e6e6" stroke-width="1.2"/><path d="M5 1.5 H9 M7 1.5 V3 M7 5.5 V8.5 H9.5 M12 3.5 L13 2.5" fill="none" stroke="#e6e6e6" stroke-width="1.2"/></svg>
<div class="t" style="left:1118px;top:1058px;color:#e6e6e6;">Start</div>
<div class="t" style="left:1171px;top:1058px;color:#e6e6e6;">1</div>
<div class="t" style="left:1208px;top:1058px;color:#e6e6e6;">End</div>
<div class="t" style="left:1242px;top:1058px;color:#e6e6e6;">250</div>
<div class="a" style="left:2px;top:1075px;width:1549px;height:20px;background:#181818;border-radius:0px;"></div>
<svg style="left:14px;top:1078px" width="11" height="15" viewBox="0 0 11 15"><rect x="0.6" y="0.6" width="9.8" height="13.8" rx="4" fill="none" stroke="#9a9a9a" stroke-width="1.1"/><path d="M1 6 V3 Q1 1 4.5 1 V6 Z" fill="#9a9a9a"/></svg>
<div class="t" style="left:36px;top:1081px;color:#9c9c9c;">Select</div>
<svg style="left:225px;top:1078px" width="11" height="15" viewBox="0 0 11 15"><rect x="0.6" y="0.6" width="9.8" height="13.8" rx="4" fill="none" stroke="#9a9a9a" stroke-width="1.1"/><rect x="4.2" y="2.5" width="2.6" height="4" rx="1" fill="#9a9a9a"/></svg>
<div class="t" style="left:247px;top:1081px;color:#9c9c9c;">Pan View</div>
<svg style="left:436px;top:1078px" width="11" height="15" viewBox="0 0 11 15"><rect x="0.6" y="0.6" width="9.8" height="13.8" rx="4" fill="none" stroke="#9a9a9a" stroke-width="1.1"/><path d="M10 6 V3 Q10 1 6.5 1 V6 Z" fill="#9a9a9a"/></svg>
<div class="t" style="left:458px;top:1081px;color:#9c9c9c;">Context Menu</div>
<div class="t" style="left:1517px;top:1081px;color:#9c9c9c;">4.1.1</div>
</body></html>
